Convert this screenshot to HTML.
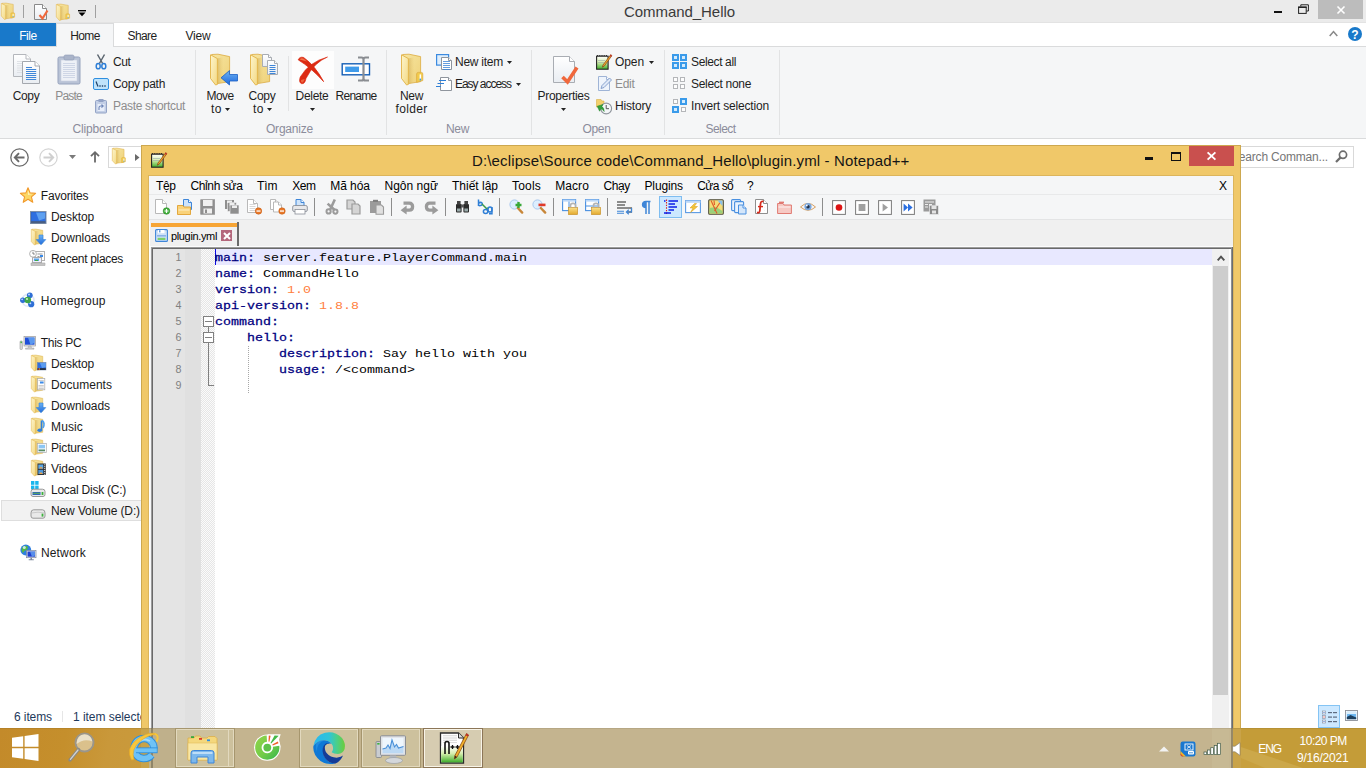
<!DOCTYPE html>
<html lang="vi">
<head>
<meta charset="utf-8">
<title>Command_Hello</title>
<style>
*{box-sizing:border-box;margin:0;padding:0}
html,body{width:1366px;height:768px;overflow:hidden;background:#fff}
body{position:relative;font-family:"Liberation Sans","DejaVu Sans",sans-serif;font-size:12px;color:#1e1e1e}
.abs{position:absolute}
.t{position:absolute;white-space:pre;line-height:14px;height:14px}
.m{font-family:"Liberation Mono","DejaVu Sans Mono",monospace}
svg{position:absolute;overflow:visible}
</style>
</head>
<body>

<svg width="0" height="0" style="position:absolute"><defs>
<linearGradient id="gF" x1="0" y1="0" x2="1" y2="1"><stop offset="0" stop-color="#fdf5cc"/><stop offset="1" stop-color="#f3d985"/></linearGradient>
<linearGradient id="gF2" x1="0" y1="0" x2="1" y2="1"><stop offset="0" stop-color="#f6e5a2"/><stop offset="1" stop-color="#efd27a"/></linearGradient>
<linearGradient id="gSp" x1="0" y1="0" x2="1" y2="0"><stop offset="0" stop-color="#c9a24a" stop-opacity=".55"/><stop offset="1" stop-color="#e6c468" stop-opacity="0"/></linearGradient>
<linearGradient id="gB" x1="0" y1="0" x2="0" y2="1"><stop offset="0" stop-color="#6db3f2"/><stop offset="1" stop-color="#1e69de"/></linearGradient>
<linearGradient id="gP" x1="0" y1="0" x2="0" y2="1"><stop offset="0" stop-color="#ffffff"/><stop offset="1" stop-color="#e9edf2"/></linearGradient>
<linearGradient id="gLock" x1="0" y1="0" x2="0" y2="1"><stop offset="0" stop-color="#fbe08a"/><stop offset="1" stop-color="#e3a92c"/></linearGradient>
<linearGradient id="gGreen" x1="0" y1="0" x2="0" y2="1"><stop offset="0" stop-color="#ffffff"/><stop offset="0.45" stop-color="#d8efb0"/><stop offset="1" stop-color="#3fae2a"/></linearGradient>
</defs></svg>
<div class="abs" style="left:0px;top:0px;width:1366px;height:23px;background:#ebebeb;"></div>
<div class="abs" style="left:0px;top:23px;width:1366px;height:24px;background:#fff;border-bottom:1px solid #dadbdc"></div>
<div class="abs" style="left:0px;top:47px;width:1366px;height:92px;background:#f5f6f7;border-bottom:1px solid #dadbdc"></div>
<svg style="left:1px;top:3px" width="13" height="17" viewBox="0 0 13 17"><g transform="scale(0.6250,0.5323)"><path d="M1.6 .5 L8 .2 L19.6 2.6 L19.6 27.6 L7.4 29.6 Z" fill="url(#gF2)" stroke="#dcab40" stroke-width=".8"/><path d="M7.4 4.6 L13.5 3 L13.5 28.6 L7.4 29.6 Z" fill="url(#gSp)"/><path d="M15.6 20 Q15.6 18.4 17.4 18.4 L20.6 18.4 Q21.8 18.4 21.8 20 L21.8 26.6 L15.6 28.4 Z" fill="#f2cb4c" stroke="#dcab40" stroke-width=".7"/><rect x="18.6" y="20.4" width="1.5" height="5.2" fill="#fff"/><rect x="18.6" y="24.6" width="1.5" height="1.8" fill="#3f9bea"/><path d="M.5 .8 L7.4 4.6 L7.4 30.4 L5.6 31 L.5 24.4 Z" fill="url(#gF)" stroke="#e2b245" stroke-width=".9" stroke-linejoin="round"/></g></svg>
<div class="abs" style="left:23px;top:5px;width:1px;height:13px;background:#a0a0a0;"></div>
<svg style="left:34px;top:4px" width="14" height="16" viewBox="0 0 14 16"><path d="M.5 .5 H8.5 L12.5 4.5 V15.5 H.5 Z" fill="url(#gP)" stroke="#8a8a8a" stroke-width="1"/><path d="M8.5 .5 V4.5 H12.5" fill="#fff" stroke="#8a8a8a" stroke-width="1"/><path d="M5.5 11 L8.5 14.5 L13.5 6.5" fill="none" stroke="#f0683c" stroke-width="2.2"/></svg>
<svg style="left:56px;top:4px" width="13" height="17" viewBox="0 0 13 17"><g transform="scale(0.6250,0.5323)"><path d="M1.6 .5 L8 .2 L19.6 2.6 L19.6 27.6 L7.4 29.6 Z" fill="url(#gF2)" stroke="#dcab40" stroke-width=".8"/><path d="M7.4 4.6 L13.5 3 L13.5 28.6 L7.4 29.6 Z" fill="url(#gSp)"/><path d="M15.6 20 Q15.6 18.4 17.4 18.4 L20.6 18.4 Q21.8 18.4 21.8 20 L21.8 26.6 L15.6 28.4 Z" fill="#f2cb4c" stroke="#dcab40" stroke-width=".7"/><rect x="18.6" y="20.4" width="1.5" height="5.2" fill="#fff"/><rect x="18.6" y="24.6" width="1.5" height="1.8" fill="#3f9bea"/><path d="M.5 .8 L7.4 4.6 L7.4 30.4 L5.6 31 L.5 24.4 Z" fill="url(#gF)" stroke="#e2b245" stroke-width=".9" stroke-linejoin="round"/></g></svg>
<svg style="left:78px;top:9px" width="8" height="8" viewBox="0 0 8 8"><rect x="0" y="1" width="8" height="1.4" fill="#000"/><path d="M0.5 3.6 H7.5 L4 7.2 Z" fill="#000"/></svg>
<div class="abs" style="left:95px;top:5px;width:1px;height:13px;background:#a0a0a0;"></div>
<div class="t" style="left:624.00px;top:2.50px;line-height:18px;height:18px;letter-spacing:-0.055px;font-size:15px;color:#3a3a3a">Command_Hello</div>
<div class="abs" style="left:1274px;top:11px;width:8px;height:2px;background:#111;"></div>
<svg style="left:1298px;top:4px" width="11" height="10" viewBox="0 0 11 10"><path d="M2.8 2.5 V0.8 H10.4 V7 H8.4" fill="none" stroke="#222" stroke-width="1"/><rect x="0.6" y="3.4" width="7.6" height="6" fill="none" stroke="#222" stroke-width="1"/><rect x=".1" y="2.4" width="8.6" height="1.5" fill="#222"/></svg>
<div class="abs" style="left:1318px;top:0px;width:45px;height:19px;background:#bcbcbc;"></div>
<svg style="left:1337px;top:5.5px" width="8" height="8" viewBox="0 0 8 8"><path d="M0.5 0.5 L7.5 7.5 M7.5 0.5 L0.5 7.5" stroke="#fff" stroke-width="1.6" fill="none"/></svg>
<div class="abs" style="left:0px;top:22px;width:1366px;height:1px;background:#e3e3e3;"></div>
<div class="abs" style="left:0px;top:23px;width:56px;height:23px;background:#1979ca;"></div>
<div class="t" style="left:19.25px;top:28.80px;line-height:14px;height:14px;letter-spacing:-0.461px;color:#fff">File</div>
<div class="abs" style="left:56px;top:23px;width:58px;height:24px;background:#f5f6f7;border:1px solid #dadbdc;border-bottom:none"></div>
<div class="t" style="left:70.25px;top:28.80px;line-height:14px;height:14px;letter-spacing:-0.629px;color:#1e1e1e">Home</div>
<div class="t" style="left:127.50px;top:28.80px;line-height:14px;height:14px;letter-spacing:-0.606px;color:#1e1e1e">Share</div>
<div class="t" style="left:185.50px;top:28.80px;line-height:14px;height:14px;letter-spacing:-0.199px;color:#1e1e1e">View</div>
<svg style="left:1329px;top:30px" width="9" height="7" viewBox="0 0 9 7"><path d="M0.7 6 L4.5 1.6 L8.3 6" fill="none" stroke="#8a8a8a" stroke-width="1.6"/></svg>
<div class="abs" style="left:1348px;top:27px;width:14px;height:14px;border-radius:7px;background:#1979ca"></div>
<div class="t" style="left:1351.33px;top:27.50px;line-height:14px;height:14px;color:#fff;font-weight:700">?</div>
<div class="abs" style="left:195px;top:50px;width:1px;height:85px;background:#e2e3e4;"></div>
<div class="abs" style="left:386px;top:50px;width:1px;height:85px;background:#e2e3e4;"></div>
<div class="abs" style="left:531px;top:50px;width:1px;height:85px;background:#e2e3e4;"></div>
<div class="abs" style="left:664px;top:50px;width:1px;height:85px;background:#e2e3e4;"></div>
<div class="abs" style="left:779px;top:50px;width:1px;height:85px;background:#e2e3e4;"></div>
<div class="abs" style="left:288px;top:56px;width:1px;height:55px;background:#e2e3e4;"></div>
<svg style="left:10px;top:54px" width="32" height="32" viewBox="0 0 32 32"><g transform="translate(3,0)"><path d="M.5 .5 H13.0 L17.5 5.0 V22.5 H.5 Z" fill="url(#gP)" stroke="#b4b7bc" stroke-width="1"/><path d="M13.0 .5 V5.0 H17.5" fill="#fff" stroke="#b4b7bc" stroke-width="1"/><rect x="4" y="7.0" width="7" height="0.8" fill="#d9dde2"/><rect x="4" y="9.2" width="7" height="0.8" fill="#d9dde2"/><rect x="4" y="11.4" width="7" height="0.8" fill="#d9dde2"/><rect x="4" y="13.600000000000001" width="7" height="0.8" fill="#d9dde2"/><rect x="4" y="15.8" width="7" height="0.8" fill="#d9dde2"/><rect x="4" y="18.0" width="7" height="0.8" fill="#d9dde2"/></g><g transform="translate(12,7)"><path d="M.5 .5 H13.0 L17.5 5.0 V22.5 H.5 Z" fill="url(#gP)" stroke="#a4a8ae" stroke-width="1"/><path d="M13.0 .5 V5.0 H17.5" fill="#fff" stroke="#a4a8ae" stroke-width="1"/><rect x="4" y="6" width="6" height="1" fill="#3f86d8"/><rect x="4" y="8" width="10.2" height="1" fill="#3f86d8"/><rect x="4" y="10" width="10.2" height="1" fill="#3f86d8"/><rect x="4" y="12" width="10.2" height="1" fill="#3f86d8"/><rect x="4" y="14" width="10.2" height="1" fill="#3f86d8"/><rect x="4" y="16" width="10.2" height="1" fill="#3f86d8"/><rect x="4" y="18" width="10.2" height="1" fill="#3f86d8"/></g></svg>
<div class="t" style="left:12.70px;top:88.80px;line-height:14px;height:14px;letter-spacing:-0.354px;color:#1e1e1e">Copy</div>
<svg style="left:53px;top:54px" width="30" height="32" viewBox="0 0 30 32"><rect x="5" y="3" width="22" height="27" rx="1.5" fill="#b9c3d6" stroke="#97a3bd"/><rect x="8" y="6" width="16" height="21" fill="#eef1f7" stroke="#c9d0df" stroke-width=".6"/><rect x="11" y="1" width="10" height="5" rx="1.5" fill="#aab4c9" stroke="#8f9bb5" stroke-width=".6"/><rect x="10" y="9" width="12" height="1" fill="#cfd6e6"/><rect x="10" y="11" width="12" height="1" fill="#cfd6e6"/><rect x="10" y="13" width="12" height="1" fill="#cfd6e6"/><rect x="10" y="15" width="12" height="1" fill="#cfd6e6"/><rect x="10" y="17" width="12" height="1" fill="#cfd6e6"/><rect x="10" y="19" width="12" height="1" fill="#cfd6e6"/><rect x="10" y="21" width="12" height="1" fill="#cfd6e6"/><rect x="10" y="23" width="12" height="1" fill="#cfd6e6"/></svg>
<div class="t" style="left:55.30px;top:88.80px;line-height:14px;height:14px;letter-spacing:-0.817px;color:#8d8d8d">Paste</div>
<svg style="left:94px;top:54px" width="14" height="16" viewBox="0 0 14 16"><path d="M3.5 0.5 L8.6 9.5 M10.5 0.5 L5.4 9.5" stroke="#5c6670" stroke-width="1.5" fill="none"/><ellipse cx="4.2" cy="12.2" rx="2" ry="2.6" fill="none" stroke="#2f7fd6" stroke-width="1.5"/><ellipse cx="9.8" cy="12.2" rx="2" ry="2.6" fill="none" stroke="#2f7fd6" stroke-width="1.5"/></svg>
<div class="t" style="left:113.00px;top:54.80px;line-height:14px;height:14px;letter-spacing:-0.396px;color:#1e1e1e">Cut</div>
<svg style="left:93px;top:78px" width="16" height="12" viewBox="0 0 16 12"><rect x=".5" y=".5" width="15" height="11" rx="1.5" fill="#bfe3fb" stroke="#2f8fe0"/><path d="M3 3.5 L5 8.5" stroke="#1d3f66" stroke-width="1.2"/><rect x="6.3" y="7.3" width="1.4" height="1.4" fill="#1d3f66"/><rect x="8.8" y="7.3" width="1.4" height="1.4" fill="#1d3f66"/><rect x="11.3" y="7.3" width="1.4" height="1.4" fill="#1d3f66"/></svg>
<div class="t" style="left:113.00px;top:76.80px;line-height:14px;height:14px;letter-spacing:-0.300px;color:#1e1e1e">Copy path</div>
<svg style="left:95px;top:99px" width="13" height="15" viewBox="0 0 13 15"><rect x=".5" y="1.5" width="11" height="12.5" rx="1" fill="#c3cfe6" stroke="#93a3c6"/><rect x="3.5" y="0" width="5" height="3" fill="#93a3c6"/><rect x="2.5" y="5" width="7" height="7" fill="#e8eefa"/><path d="M4 11 L4 8.5 Q4 7 5.8 7 L8 7 M6.5 5.5 L8.2 7 L6.5 8.6" fill="none" stroke="#7189b9" stroke-width="1.1"/></svg>
<div class="t" style="left:113.00px;top:98.80px;line-height:14px;height:14px;letter-spacing:-0.337px;color:#8d8d8d">Paste shortcut</div>
<div class="t" style="left:72.50px;top:122.00px;line-height:14px;height:14px;letter-spacing:-0.153px;color:#8b8c9b">Clipboard</div>
<svg style="left:207px;top:53px" width="32" height="34" viewBox="0 0 32 34"><g transform="translate(3,1)"><g transform="scale(1.0000,1.0000)"><path d="M1.6 .5 L8 .2 L19.6 2.6 L19.6 27.6 L7.4 29.6 Z" fill="url(#gF2)" stroke="#dcab40" stroke-width=".8"/><path d="M7.4 4.6 L13.5 3 L13.5 28.6 L7.4 29.6 Z" fill="url(#gSp)"/><path d="M.5 .8 L7.4 4.6 L7.4 30.4 L5.6 31 L.5 24.4 Z" fill="url(#gF)" stroke="#e2b245" stroke-width=".9" stroke-linejoin="round"/></g></g><path d="M30.5 21.5 V28 H22.5 V32 L14 24.8 L22.5 17.5 V21.5 Z" fill="url(#gB)" stroke="#1a5fc4" stroke-width=".8"/></svg>
<div class="t" style="left:206.50px;top:88.80px;line-height:14px;height:14px;letter-spacing:-0.586px;color:#1e1e1e">Move</div>
<div class="t" style="left:211.00px;top:101.60px;line-height:14px;height:14px;letter-spacing:0.492px;color:#1e1e1e">to</div>
<svg style="left:225px;top:108px" width="5" height="3" viewBox="0 0 5 3"><path d="M0 0 H5 L2.5 3 Z" fill="#222"/></svg>
<svg style="left:248px;top:53px" width="34" height="34" viewBox="0 0 34 34"><g transform="translate(2,1)"><g transform="scale(1.0000,1.0000)"><path d="M1.6 .5 L8 .2 L19.6 2.6 L19.6 27.6 L7.4 29.6 Z" fill="url(#gF2)" stroke="#dcab40" stroke-width=".8"/><path d="M7.4 4.6 L13.5 3 L13.5 28.6 L7.4 29.6 Z" fill="url(#gSp)"/><path d="M.5 .8 L7.4 4.6 L7.4 30.4 L5.6 31 L.5 24.4 Z" fill="url(#gF)" stroke="#e2b245" stroke-width=".9" stroke-linejoin="round"/></g></g><g transform="translate(14,1)"><path d="M.5 .5 H6.5 L9.5 3.5 V12.5 H.5 Z" fill="url(#gP)" stroke="#a9adb3" stroke-width="1"/><path d="M6.5 .5 V3.5 H9.5" fill="#fff" stroke="#a9adb3" stroke-width="1"/></g><g transform="translate(19,7)"><path d="M.5 .5 H7.5 L10.5 3.5 V14.5 H.5 Z" fill="url(#gP)" stroke="#a9adb3" stroke-width="1"/><path d="M7.5 .5 V3.5 H10.5" fill="#fff" stroke="#a9adb3" stroke-width="1"/><rect x="2.5" y="5" width="6" height="1" fill="#3f86d8"/><rect x="2.5" y="7" width="6" height="1" fill="#3f86d8"/><rect x="2.5" y="9" width="6" height="1" fill="#3f86d8"/><rect x="2.5" y="11" width="6" height="1" fill="#3f86d8"/><rect x="2.5" y="13" width="6" height="1" fill="#3f86d8"/></g></svg>
<div class="t" style="left:248.50px;top:88.80px;line-height:14px;height:14px;letter-spacing:-0.254px;color:#1e1e1e">Copy</div>
<div class="t" style="left:253.00px;top:101.60px;line-height:14px;height:14px;letter-spacing:0.492px;color:#1e1e1e">to</div>
<svg style="left:267px;top:108px" width="5" height="3" viewBox="0 0 5 3"><path d="M0 0 H5 L2.5 3 Z" fill="#222"/></svg>
<div class="abs" style="left:292px;top:51px;width:42px;height:38px;background:#fdfdfd;"></div>
<svg style="left:297px;top:56px" width="31" height="29" viewBox="0 0 31 29"><path d="M1.2 3.8 Q2.6 .4 6.6 1.5 Q18 9.5 26.6 25.6 Q14 11.5 1.2 3.8 Z" fill="#dc2a12" stroke="#dc2a12" stroke-width=".8" stroke-linejoin="round"/><path d="M30.5 1 Q17 6.5 9 22.5 Q8 28.2 4.6 27.7 Q1.4 26.6 3.2 21 Q12 6 30.5 1 Z" fill="#dc2a12" stroke="#dc2a12" stroke-width=".6" stroke-linejoin="round"/><path d="M2.6 3.4 Q4 1.6 6.4 2.6 L10 5.6 Z" fill="#f2734a"/><path d="M4 24 Q3.6 26.6 5.4 26.8 Q7 26 7.6 23 Z" fill="#f2734a" opacity=".8"/></svg>
<div class="t" style="left:295.50px;top:88.80px;line-height:14px;height:14px;letter-spacing:-0.281px;color:#1e1e1e">Delete</div>
<svg style="left:309.5px;top:108px" width="5" height="3" viewBox="0 0 5 3"><path d="M0 0 H5 L2.5 3 Z" fill="#222"/></svg>
<svg style="left:341px;top:56px" width="32" height="27" viewBox="0 0 32 27"><rect x="1.2" y="7.8" width="27.3" height="11" fill="#fff" stroke="#165fb6" stroke-width="1.4"/><rect x="4.2" y="10.6" width="13.8" height="5.4" fill="#3f9bea"/><path d="M17 1.5 H20.5 Q22.5 1.5 22.5 3.5 V22.5 Q22.5 24.5 20.5 24.5 H17 M28 1.5 H24.5 Q22.5 1.5 22.5 3.5 M22.5 22.5 Q22.5 24.5 24.5 24.5 H28" fill="none" stroke="#8a8d92" stroke-width="2.2"/></svg>
<div class="t" style="left:335.50px;top:88.80px;line-height:14px;height:14px;letter-spacing:-0.727px;color:#1e1e1e">Rename</div>
<div class="t" style="left:266.00px;top:122.00px;line-height:14px;height:14px;letter-spacing:-0.213px;color:#8b8c9b">Organize</div>
<svg style="left:397px;top:53px" width="32" height="34" viewBox="0 0 32 34"><g transform="translate(4,1)"><g transform="scale(1.0000,1.0000)"><path d="M1.6 .5 L8 .2 L19.6 2.6 L19.6 27.6 L7.4 29.6 Z" fill="url(#gF2)" stroke="#dcab40" stroke-width=".8"/><path d="M7.4 4.6 L13.5 3 L13.5 28.6 L7.4 29.6 Z" fill="url(#gSp)"/><path d="M15.6 20 Q15.6 18.4 17.4 18.4 L20.6 18.4 Q21.8 18.4 21.8 20 L21.8 26.6 L15.6 28.4 Z" fill="#f2cb4c" stroke="#dcab40" stroke-width=".7"/><rect x="18.6" y="20.4" width="1.5" height="5.2" fill="#fff"/><rect x="18.6" y="24.6" width="1.5" height="1.8" fill="#3f9bea"/><path d="M.5 .8 L7.4 4.6 L7.4 30.4 L5.6 31 L.5 24.4 Z" fill="url(#gF)" stroke="#e2b245" stroke-width=".9" stroke-linejoin="round"/></g></g></svg>
<div class="t" style="left:400.00px;top:88.80px;line-height:14px;height:14px;letter-spacing:-0.339px;color:#1e1e1e">New</div>
<div class="t" style="left:395.50px;top:101.60px;line-height:14px;height:14px;letter-spacing:0.328px;color:#1e1e1e">folder</div>
<svg style="left:436px;top:54px" width="17" height="17" viewBox="0 0 17 17"><rect x=".6" y=".6" width="12" height="10.5" fill="#dfeefc" stroke="#3b8ae0" stroke-width="1.2"/><g transform="translate(5,3)"><path d="M.5 .5 H7.5 L10.5 3.5 V12.5 H.5 Z" fill="#fff" stroke="#8f959d" stroke-width="1"/><path d="M7.5 .5 V3.5 H10.5" fill="#fff" stroke="#8f959d" stroke-width="1"/><rect x="2" y="4" width="7" height="0.8" fill="#3f86d8"/><rect x="2" y="6" width="7" height="0.8" fill="#3f86d8"/><rect x="2" y="8" width="7" height="0.8" fill="#3f86d8"/><rect x="2" y="10" width="7" height="0.8" fill="#3f86d8"/><rect x="2" y="12" width="7" height="0.8" fill="#3f86d8"/></g></svg>
<div class="t" style="left:455.00px;top:54.80px;line-height:14px;height:14px;letter-spacing:-0.252px;color:#1e1e1e">New item</div>
<svg style="left:507px;top:60.5px" width="5" height="3" viewBox="0 0 5 3"><path d="M0 0 H5 L2.5 3 Z" fill="#222"/></svg>
<svg style="left:436px;top:76px" width="17" height="16" viewBox="0 0 17 16"><g transform="translate(4,1)"><path d="M.5 .5 H8.5 L11.5 3.5 V13.5 H.5 Z" fill="#fff" stroke="#8f959d" stroke-width="1"/><path d="M8.5 .5 V3.5 H11.5" fill="#fff" stroke="#8f959d" stroke-width="1"/></g><path d="M3 4.5 H10 M1.5 7.5 H8 M0 10.5 H5" stroke="#2f7fd6" stroke-width="1.2"/></svg>
<div class="t" style="left:455.00px;top:76.80px;line-height:14px;height:14px;letter-spacing:-1.033px;color:#1e1e1e">Easy access</div>
<svg style="left:516px;top:82.5px" width="5" height="3" viewBox="0 0 5 3"><path d="M0 0 H5 L2.5 3 Z" fill="#222"/></svg>
<div class="t" style="left:446.00px;top:122.00px;line-height:14px;height:14px;letter-spacing:-0.339px;color:#8b8c9b">New</div>
<svg style="left:552px;top:55px" width="28" height="30" viewBox="0 0 28 30"><g transform="translate(1,1)"><path d="M.5 .5 H16.5 L21.5 5.5 V26.5 H.5 Z" fill="url(#gP)" stroke="#a9adb3" stroke-width="1"/><path d="M16.5 .5 V5.5 H21.5" fill="#fff" stroke="#a9adb3" stroke-width="1"/></g><path d="M10.5 22 L15.5 27 L25 12.5" fill="none" stroke="#f0683c" stroke-width="3.6"/></svg>
<div class="t" style="left:537.50px;top:88.80px;line-height:14px;height:14px;letter-spacing:-0.270px;color:#1e1e1e">Properties</div>
<svg style="left:561px;top:108px" width="5" height="3" viewBox="0 0 5 3"><path d="M0 0 H5 L2.5 3 Z" fill="#222"/></svg>
<svg style="left:596px;top:54px" width="16" height="16" viewBox="0 0 16 16"><g transform="scale(1.0)"><rect x=".6" y="2.2" width="11.5" height="13" fill="url(#gGreen)" stroke="#222" stroke-width="1.1"/><path d="M1.5 2 V1 M3.3 2 V1 M5.1 2 V1 M6.9 2 V1 M8.7 2 V1 M10.5 2 V1" stroke="#222" stroke-width=".9"/><path d="M2 6.5 H9 M2 8.5 H8" stroke="#9aa" stroke-width=".6"/><path d="M14.8 .6 L15.8 1.8 L8.3 12 L6.4 13.2 L7 11 Z" fill="#f0b028" stroke="#8a3a18" stroke-width=".7"/><path d="M13.9 1.8 L14.8 .6 L15.8 1.8 L15 3 Z" fill="#c0282a"/></g></svg>
<div class="t" style="left:615.00px;top:54.80px;line-height:14px;height:14px;letter-spacing:-0.090px;color:#1e1e1e">Open</div>
<svg style="left:649px;top:60.5px" width="5" height="3" viewBox="0 0 5 3"><path d="M0 0 H5 L2.5 3 Z" fill="#222"/></svg>
<svg style="left:598px;top:76px" width="14" height="16" viewBox="0 0 14 16"><path d="M.5 .5 H8.5 L11.5 3.5 V14.5 H.5 Z" fill="#eef4fc" stroke="#9fb4d6" stroke-width="1"/><path d="M8.5 .5 V3.5 H11.5" fill="#fff" stroke="#9fb4d6" stroke-width="1"/><path d="M3 12.5 L4 9.5 L11.5 2 L13.5 4 L6 11.5 Z" fill="#dfe9f8" stroke="#7d98c8" stroke-width=".9"/></svg>
<div class="t" style="left:615.00px;top:76.80px;line-height:14px;height:14px;letter-spacing:-0.297px;color:#8d8d8d">Edit</div>
<svg style="left:596px;top:98px" width="17" height="17" viewBox="0 0 17 17"><path d="M.5 1.5 H5 L6 3 H8 V9 H.5 Z" fill="#f3d06c" stroke="#d9ae45" stroke-width=".6"/><circle cx="10.2" cy="10.5" r="5.4" fill="#f4f6f8" stroke="#8f959c" stroke-width="1.1"/><path d="M10.2 7 V10.7 H13" fill="none" stroke="#555" stroke-width="1"/><path d="M1.2 8.2 L3.6 13.2 L5 10.8 Q7 11.5 8.2 13.5 Q8 9.5 5.9 8.6 L7 6.5 Z" fill="#35a03a" stroke="#23822a" stroke-width=".5"/></svg>
<div class="t" style="left:615.00px;top:98.80px;line-height:14px;height:14px;letter-spacing:-0.192px;color:#1e1e1e">History</div>
<div class="t" style="left:582.50px;top:122.00px;line-height:14px;height:14px;letter-spacing:-0.340px;color:#8b8c9b">Open</div>
<svg style="left:672px;top:54px" width="16" height="16" viewBox="0 0 16 16"><rect x="0" y="0" width="7" height="7" fill="#3a9bea"/><rect x="2" y="2" width="3" height="3" fill="#d4ebfc"/><rect x="8" y="0" width="7" height="7" fill="#3a9bea"/><rect x="10" y="2" width="3" height="3" fill="#d4ebfc"/><rect x="0" y="8" width="7" height="7" fill="#3a9bea"/><rect x="2" y="10" width="3" height="3" fill="#d4ebfc"/><rect x="8" y="8" width="7" height="7" fill="#3a9bea"/><rect x="10" y="10" width="3" height="3" fill="#d4ebfc"/></svg>
<div class="t" style="left:691.00px;top:54.80px;line-height:14px;height:14px;letter-spacing:-0.370px;color:#1e1e1e">Select all</div>
<svg style="left:672px;top:76px" width="16" height="16" viewBox="0 0 16 16"><rect x="1.5" y="1.5" width="4" height="4" fill="#fdfdfd" stroke="#b4b6b9" stroke-width="1"/><rect x="8.5" y="1.5" width="4" height="4" fill="#fdfdfd" stroke="#b4b6b9" stroke-width="1"/><rect x="1.5" y="8.5" width="4" height="4" fill="#fdfdfd" stroke="#b4b6b9" stroke-width="1"/><rect x="8.5" y="8.5" width="4" height="4" fill="#fdfdfd" stroke="#b4b6b9" stroke-width="1"/></svg>
<div class="t" style="left:691.00px;top:76.80px;line-height:14px;height:14px;letter-spacing:-0.308px;color:#1e1e1e">Select none</div>
<svg style="left:672px;top:98px" width="16" height="16" viewBox="0 0 16 16"><rect x="1.5" y="1.5" width="4" height="4" fill="#fdfdfd" stroke="#b4b6b9" stroke-width="1"/><rect x="8" y="0" width="7" height="7" fill="#3a9bea"/><rect x="10" y="2" width="3" height="3" fill="#d4ebfc"/><rect x="0" y="8" width="7" height="7" fill="#3a9bea"/><rect x="2" y="10" width="3" height="3" fill="#d4ebfc"/><rect x="9.5" y="9.5" width="4" height="4" fill="#fdfdfd" stroke="#b4b6b9" stroke-width="1"/></svg>
<div class="t" style="left:691.00px;top:98.80px;line-height:14px;height:14px;letter-spacing:-0.170px;color:#1e1e1e">Invert selection</div>
<div class="t" style="left:705.50px;top:122.00px;line-height:14px;height:14px;letter-spacing:-0.560px;color:#8b8c9b">Select</div>
<svg style="left:10px;top:147.5px" width="19" height="19" viewBox="0 0 19 19"><circle cx="9.5" cy="9.5" r="8.7" fill="none" stroke="#6a6a6a" stroke-width="1.3"/><path d="M14.5 9.5 H5 M9 5.2 L4.8 9.5 L9 13.8" fill="none" stroke="#6a6a6a" stroke-width="1.9"/></svg>
<svg style="left:38.5px;top:147.5px" width="19" height="19" viewBox="0 0 19 19"><circle cx="9.5" cy="9.5" r="8.7" fill="none" stroke="#d4d4d4" stroke-width="1.2"/><path d="M4.5 9.5 H14 M10 5.2 L14.2 9.5 L10 13.8" fill="none" stroke="#cfcfcf" stroke-width="1.9"/></svg>
<svg style="left:69px;top:155px" width="7" height="4" viewBox="0 0 7 4"><path d="M0 0 H7 L3.5 4 Z" fill="#7a7a7a"/></svg>
<svg style="left:90px;top:151px" width="10" height="12" viewBox="0 0 10 12"><path d="M5 11.5 V1.5 M1 5.2 L5 1.2 L9 5.2" fill="none" stroke="#6a6a6a" stroke-width="1.8"/></svg>
<div class="abs" style="left:108px;top:146px;width:40px;height:22px;background:#fff;border:1px solid #d9d9d9"></div>
<svg style="left:112px;top:148px" width="13" height="16" viewBox="0 0 13 16"><g transform="scale(0.6150,0.5161)"><path d="M1.6 .5 L8 .2 L19.6 2.6 L19.6 27.6 L7.4 29.6 Z" fill="url(#gF2)" stroke="#dcab40" stroke-width=".8"/><path d="M7.4 4.6 L13.5 3 L13.5 28.6 L7.4 29.6 Z" fill="url(#gSp)"/><path d="M15.6 20 Q15.6 18.4 17.4 18.4 L20.6 18.4 Q21.8 18.4 21.8 20 L21.8 26.6 L15.6 28.4 Z" fill="#f2cb4c" stroke="#dcab40" stroke-width=".7"/><rect x="18.6" y="20.4" width="1.5" height="5.2" fill="#fff"/><rect x="18.6" y="24.6" width="1.5" height="1.8" fill="#3f9bea"/><path d="M.5 .8 L7.4 4.6 L7.4 30.4 L5.6 31 L.5 24.4 Z" fill="url(#gF)" stroke="#e2b245" stroke-width=".9" stroke-linejoin="round"/></g></svg>
<svg style="left:135px;top:154px" width="5" height="7" viewBox="0 0 5 7"><path d="M0 0 L4.5 3.5 L0 7 Z" fill="#6a6a6a"/></svg>
<div class="abs" style="left:1225px;top:146px;width:129px;height:22px;background:#fff;border:1px solid #d9d9d9"></div>
<div class="t" style="left:1231.00px;top:149.50px;line-height:14px;height:14px;letter-spacing:-0.190px;color:#767676">Search Comman...</div>
<svg style="left:1335px;top:150px" width="13" height="13" viewBox="0 0 13 13"><circle cx="8" cy="4.8" r="3.6" fill="none" stroke="#6d6d6d" stroke-width="1.7"/><path d="M5.6 7.4 L1 12" stroke="#6d6d6d" stroke-width="2.2"/></svg>
<div class="abs" style="left:1px;top:500px;width:141px;height:21px;background:#f2f2f2;border:1px solid #dedede"></div>
<svg style="left:20px;top:187px" width="16" height="16" viewBox="0 0 16 16"><path d="M8 .8 L10.1 5.9 L15.6 6.3 L11.4 9.9 L12.8 15.3 L8 12.3 L3.2 15.3 L4.6 9.9 L.4 6.3 L5.9 5.9 Z" fill="#fcd765" stroke="#f19a2c" stroke-width="1.1" stroke-linejoin="round"/><path d="M8 3.5 L9.3 6.8 L12.5 7 L8 8 Z" fill="#fff3b8"/></svg>
<div class="t" style="left:40.80px;top:188.50px;line-height:14px;height:14px;letter-spacing:-0.207px;color:#1a1a1a">Favorites</div>
<svg style="left:30px;top:211px" width="17" height="13" viewBox="0 0 17 13"><rect x=".5" y=".5" width="15.5" height="12" fill="#2a62c8" stroke="#7f90a8"/><rect x="1.5" y="1.5" width="13.5" height="8.5" fill="#2f6fe0"/><path d="M6 1.5 L15 1.5 L15 7.5 L9 9.5 Z" fill="#6fb0f6" opacity=".75"/><rect x="1" y="10.2" width="14.5" height="2" fill="#4a5e80"/></svg>
<div class="t" style="left:51.00px;top:209.50px;line-height:14px;height:14px;letter-spacing:-0.147px;color:#1a1a1a">Desktop</div>
<svg style="left:31px;top:229px" width="16" height="16" viewBox="0 0 16 16"><g transform="scale(0.6000,0.5161)"><path d="M1.6 .5 L8 .2 L19.6 2.6 L19.6 27.6 L7.4 29.6 Z" fill="url(#gF2)" stroke="#dcab40" stroke-width=".8"/><path d="M7.4 4.6 L13.5 3 L13.5 28.6 L7.4 29.6 Z" fill="url(#gSp)"/><path d="M.5 .8 L7.4 4.6 L7.4 30.4 L5.6 31 L.5 24.4 Z" fill="url(#gF)" stroke="#e2b245" stroke-width=".9" stroke-linejoin="round"/></g><path d="M8 6 H12 V10.6 H14.8 L10 15.8 L5.2 10.6 H8 Z" fill="url(#gB)" stroke="#2b7fdc" stroke-width=".6"/></svg>
<div class="t" style="left:51.00px;top:230.50px;line-height:14px;height:14px;letter-spacing:-0.042px;color:#1a1a1a">Downloads</div>
<svg style="left:29px;top:250px" width="17" height="16" viewBox="0 0 17 16"><rect x="6.5" y="1.5" width="9" height="9" fill="#fdfdfd" stroke="#b0b0b0"/><rect x="8.5" y="3.5" width="5" height="1" fill="#999"/><rect x="11" y="5" width="3" height="2" fill="#3a8ae8"/><rect x="8.5" y="6" width="2" height="1" fill="#999"/><rect x="3.5" y="7.5" width="9" height="5" fill="#eef" stroke="#aaa"/><rect x="5" y="8.5" width="5" height="2.5" fill="#5aa7e8"/><rect x="6" y="10" width="3" height="1" fill="#4a4"/><path d="M2 13 H16 V15.5 H2 Z" fill="#c4c4c4" stroke="#a8a8a8" stroke-width=".6"/><circle cx="4" cy="3.8" r="3.4" fill="#fff" stroke="#aaa" stroke-width=".9"/><path d="M4 1.8 V4 H5.8" stroke="#666" stroke-width=".8" fill="none"/></svg>
<div class="t" style="left:51.00px;top:251.50px;line-height:14px;height:14px;letter-spacing:-0.311px;color:#1a1a1a">Recent places</div>
<svg style="left:20px;top:292px" width="16" height="16" viewBox="0 0 16 16"><circle cx="8" cy="8.2" r="6" fill="none" stroke="#dfe8f6" stroke-width="1.6"/><circle cx="9.8" cy="3.3" r="2.9" fill="#2f6fd6"/><circle cx="9" cy="2.4" r="1" fill="#bcd8ff"/><circle cx="2.8" cy="8.2" r="2.7" fill="#2f6fd6"/><circle cx="2.1" cy="7.3" r=".9" fill="#bcd8ff"/><circle cx="11.2" cy="12.2" r="3.1" fill="#2f6fd6"/><circle cx="10.3" cy="11.2" r="1" fill="#bcd8ff"/><circle cx="7.8" cy="8" r="3.3" fill="#3fa64a"/><circle cx="7" cy="7" r="1.1" fill="#c3efc0"/></svg>
<div class="t" style="left:40.80px;top:293.50px;line-height:14px;height:14px;letter-spacing:0.255px;color:#1a1a1a">Homegroup</div>
<svg style="left:20px;top:336px" width="16" height="14" viewBox="0 0 16 14"><rect x="0" y="5" width="2.4" height="8.5" rx=".8" fill="#d8d8d8" stroke="#8a8a8a" stroke-width=".5"/><rect x=".5" y="5.5" width="1.4" height="1.6" fill="#3db13d"/><rect x="4" y=".5" width="11.5" height="9.5" fill="#e6e6e6" stroke="#9a9a9a" stroke-width=".7"/><rect x="5" y="1.5" width="9.5" height="7.2" fill="#1f4fd8"/><path d="M8 1.5 L14.5 1.5 L14.5 7 L10.5 8.7 Z" fill="#6fb0f6" opacity=".75"/><path d="M8.5 10 H11 L11.6 12 H14 V13.2 H5.5 V12 H7.9 Z" fill="#c9c9c9" stroke="#9a9a9a" stroke-width=".4"/></svg>
<div class="t" style="left:40.80px;top:335.50px;line-height:14px;height:14px;letter-spacing:-0.312px;color:#1a1a1a">This PC</div>
<svg style="left:31px;top:355px" width="16" height="16" viewBox="0 0 16 16"><g transform="scale(0.6000,0.5161)"><path d="M1.6 .5 L8 .2 L19.6 2.6 L19.6 27.6 L7.4 29.6 Z" fill="url(#gF2)" stroke="#dcab40" stroke-width=".8"/><path d="M7.4 4.6 L13.5 3 L13.5 28.6 L7.4 29.6 Z" fill="url(#gSp)"/><path d="M.5 .8 L7.4 4.6 L7.4 30.4 L5.6 31 L.5 24.4 Z" fill="url(#gF)" stroke="#e2b245" stroke-width=".9" stroke-linejoin="round"/></g><rect x="6.3" y="7.5" width="8.7" height="7.5" fill="#2f6fe0" stroke="#6f86a8" stroke-width=".5"/><path d="M9 8 L14.8 8 L14.8 12 L11 13 Z" fill="#6fb0f6" opacity=".7"/><rect x="6.5" y="13.3" width="8.3" height="1.5" fill="#222"/><rect x="7" y="13.5" width="1" height="1" fill="#e33"/><rect x="8" y="13.5" width="1" height="1" fill="#fc3"/></svg>
<div class="t" style="left:51.00px;top:356.50px;line-height:14px;height:14px;letter-spacing:-0.147px;color:#1a1a1a">Desktop</div>
<svg style="left:31px;top:376px" width="16" height="16" viewBox="0 0 16 16"><g transform="scale(0.6000,0.5161)"><path d="M1.6 .5 L8 .2 L19.6 2.6 L19.6 27.6 L7.4 29.6 Z" fill="url(#gF2)" stroke="#dcab40" stroke-width=".8"/><path d="M7.4 4.6 L13.5 3 L13.5 28.6 L7.4 29.6 Z" fill="url(#gSp)"/><path d="M.5 .8 L7.4 4.6 L7.4 30.4 L5.6 31 L.5 24.4 Z" fill="url(#gF)" stroke="#e2b245" stroke-width=".9" stroke-linejoin="round"/></g><rect x="6.5" y="2.5" width="7.3" height="11.3" fill="#fdfdfd" stroke="#a9a9a9" stroke-width=".7"/><rect x="9" y="5.5" width="3.6" height="2" fill="#3a8ae8"/><rect x="7.5" y="9.0" width="5.3" height="0.7" fill="#b9b9b9"/><rect x="7.5" y="10.6" width="5.3" height="0.7" fill="#b9b9b9"/><rect x="7.5" y="12.2" width="5.3" height="0.7" fill="#b9b9b9"/><rect x="7.5" y="4" width="5.3" height="0.7" fill="#b9b9b9"/></svg>
<div class="t" style="left:51.00px;top:377.50px;line-height:14px;height:14px;letter-spacing:0.033px;color:#1a1a1a">Documents</div>
<svg style="left:31px;top:397px" width="16" height="16" viewBox="0 0 16 16"><g transform="scale(0.6000,0.5161)"><path d="M1.6 .5 L8 .2 L19.6 2.6 L19.6 27.6 L7.4 29.6 Z" fill="url(#gF2)" stroke="#dcab40" stroke-width=".8"/><path d="M7.4 4.6 L13.5 3 L13.5 28.6 L7.4 29.6 Z" fill="url(#gSp)"/><path d="M.5 .8 L7.4 4.6 L7.4 30.4 L5.6 31 L.5 24.4 Z" fill="url(#gF)" stroke="#e2b245" stroke-width=".9" stroke-linejoin="round"/></g><path d="M8 6 H12 V10.6 H14.8 L10 15.8 L5.2 10.6 H8 Z" fill="url(#gB)" stroke="#2b7fdc" stroke-width=".6"/></svg>
<div class="t" style="left:51.00px;top:398.50px;line-height:14px;height:14px;letter-spacing:-0.042px;color:#1a1a1a">Downloads</div>
<svg style="left:31px;top:418px" width="16" height="16" viewBox="0 0 16 16"><g transform="scale(0.6000,0.5161)"><path d="M1.6 .5 L8 .2 L19.6 2.6 L19.6 27.6 L7.4 29.6 Z" fill="url(#gF2)" stroke="#dcab40" stroke-width=".8"/><path d="M7.4 4.6 L13.5 3 L13.5 28.6 L7.4 29.6 Z" fill="url(#gSp)"/><path d="M.5 .8 L7.4 4.6 L7.4 30.4 L5.6 31 L.5 24.4 Z" fill="url(#gF)" stroke="#e2b245" stroke-width=".9" stroke-linejoin="round"/></g><path d="M10.5 2.5 V12" stroke="#2f7fdc" stroke-width="1.6"/><path d="M11 2.5 Q14.5 5 12 10" fill="none" stroke="#4fa0ee" stroke-width="1.6"/><ellipse cx="8.8" cy="12.3" rx="2.4" ry="1.8" fill="#2f7fdc"/></svg>
<div class="t" style="left:51.00px;top:419.50px;line-height:14px;height:14px;letter-spacing:0.131px;color:#1a1a1a">Music</div>
<svg style="left:31px;top:439px" width="16" height="16" viewBox="0 0 16 16"><g transform="scale(0.6000,0.5161)"><path d="M1.6 .5 L8 .2 L19.6 2.6 L19.6 27.6 L7.4 29.6 Z" fill="url(#gF2)" stroke="#dcab40" stroke-width=".8"/><path d="M7.4 4.6 L13.5 3 L13.5 28.6 L7.4 29.6 Z" fill="url(#gSp)"/><path d="M.5 .8 L7.4 4.6 L7.4 30.4 L5.6 31 L.5 24.4 Z" fill="url(#gF)" stroke="#e2b245" stroke-width=".9" stroke-linejoin="round"/></g><rect x="6.3" y="4.5" width="9" height="9" fill="#fdfdfd" stroke="#a9a9a9" stroke-width=".7"/><rect x="7.6" y="5.8" width="6.4" height="6.4" fill="#8cc6f4"/><rect x="7.6" y="9.3" width="6.4" height="1.3" fill="#f4f8fb"/><rect x="7.6" y="10.6" width="6.4" height="1.6" fill="#5a8d62"/></svg>
<div class="t" style="left:51.00px;top:440.50px;line-height:14px;height:14px;letter-spacing:-0.170px;color:#1a1a1a">Pictures</div>
<svg style="left:31px;top:460px" width="16" height="16" viewBox="0 0 16 16"><g transform="scale(0.6000,0.5161)"><path d="M1.6 .5 L8 .2 L19.6 2.6 L19.6 27.6 L7.4 29.6 Z" fill="url(#gF2)" stroke="#dcab40" stroke-width=".8"/><path d="M7.4 4.6 L13.5 3 L13.5 28.6 L7.4 29.6 Z" fill="url(#gSp)"/><path d="M.5 .8 L7.4 4.6 L7.4 30.4 L5.6 31 L.5 24.4 Z" fill="url(#gF)" stroke="#e2b245" stroke-width=".9" stroke-linejoin="round"/></g><rect x="6.5" y="3.5" width="8.3" height="11.5" fill="#2b2b2b"/><rect x="7.3" y="4.5" width="5" height="4.3" fill="#5aa7e8"/><rect x="7.3" y="9.8" width="5" height="4.3" fill="#4f97d8"/><path d="M8 8.5 L10 6.5 L12 8.5 Z" fill="#e8a04a"/><path d="M8 14 L10 12 L12 14 Z" fill="#e8a04a"/><rect x="13.2" y="4.3" width="1" height="1" fill="#eee"/><rect x="13.2" y="6.199999999999999" width="1" height="1" fill="#eee"/><rect x="13.2" y="8.1" width="1" height="1" fill="#eee"/><rect x="13.2" y="10.0" width="1" height="1" fill="#eee"/><rect x="13.2" y="11.899999999999999" width="1" height="1" fill="#eee"/><rect x="13.2" y="13.8" width="1" height="1" fill="#eee"/></svg>
<div class="t" style="left:51.00px;top:461.50px;line-height:14px;height:14px;letter-spacing:-0.081px;color:#1a1a1a">Videos</div>
<svg style="left:30px;top:481px" width="16" height="16" viewBox="0 0 16 16"><rect x="1" y="0" width="3.4" height="3.8" fill="#19b6ee"/><rect x="5.2" y="0" width="3.4" height="3.8" fill="#19b6ee"/><rect x="1" y="4.6" width="3.4" height="3.8" fill="#19b6ee"/><rect x="5.2" y="4.6" width="3.4" height="3.8" fill="#19b6ee"/><path d="M1 10.5 Q1 8.2 3.5 8.2 H12.5 Q15 8.2 15 10.5 V13.5 Q15 15.5 13 15.5 H3 Q1 15.5 1 13.5 Z" fill="#e9e9e9" stroke="#8e8e8e" stroke-width=".9"/><rect x="11.6" y="11" width="1.8" height="3" fill="#3db13d"/><rect x="2.5" y="11" width="8" height="3" fill="#2f66b8"/><rect x="3" y="11.8" width="7" height="1.2" fill="#54a36a"/></svg>
<div class="t" style="left:51.00px;top:482.50px;line-height:14px;height:14px;letter-spacing:-0.246px;color:#1a1a1a">Local Disk (C:)</div>
<svg style="left:30px;top:508.5px" width="16" height="10" viewBox="0 0 16 10"><path d="M1 4 Q1 0.8 3.5 0.8 H12.5 Q15 0.8 15 4 V7 Q15 9.2 13 9.2 H3 Q1 9.2 1 7 Z" fill="#e9e9e9" stroke="#8e8e8e" stroke-width=".9"/><rect x="11.6" y="4.6" width="1.8" height="3" fill="#3db13d"/><path d="M1.4 4 Q8 2.4 14.6 4" fill="none" stroke="#bdbdbd" stroke-width=".7"/></svg>
<div class="t" style="left:51.00px;top:503.50px;line-height:14px;height:14px;letter-spacing:-0.114px;color:#1a1a1a">New Volume (D:)</div>
<svg style="left:20px;top:544px" width="17" height="17" viewBox="0 0 17 17"><circle cx="5.8" cy="6" r="5.4" fill="#2f7fe0"/><path d="M2 3.5 Q4.5 1 7 2 Q9 4 6.5 6 Q4 6.5 3 9 Q1 7 2 3.5 Z" fill="#54b848"/><path d="M6.5 8 Q9 7.5 9.5 10 L7 11 Z" fill="#54b848"/><circle cx="4.3" cy="3.6" r="1.5" fill="#dff3ff" opacity=".85"/><rect x="6.5" y="6.5" width="9.5" height="7.2" fill="#e8e8e8" stroke="#7a86a0" stroke-width=".7"/><rect x="7.5" y="7.5" width="7.5" height="5.2" fill="#1f3fd0"/><path d="M10 7.5 L15 7.5 L15 11.5 L12 12.7 Z" fill="#6fb0f6" opacity=".7"/><path d="M10.5 13.8 H12 V15.3 H13.8 V16.3 H8.7 V15.3 H10.5 Z" fill="#7f8aa0"/></svg>
<div class="t" style="left:41.00px;top:545.50px;line-height:14px;height:14px;letter-spacing:0.141px;color:#1a1a1a">Network</div>
<div class="t" style="left:14.00px;top:709.50px;line-height:14px;height:14px;letter-spacing:-0.098px;color:#1e395b">6 items</div>
<div class="abs" style="left:62px;top:711px;width:1px;height:11px;background:#e6e6e6;"></div>
<div class="t" style="left:73.00px;top:709.50px;line-height:14px;height:14px;letter-spacing:-0.048px;color:#1e395b">1 item selected</div>
<div class="abs" style="left:1318px;top:705px;width:22px;height:23px;background:#cce8ff;border:1px solid #84c4f4"></div>
<svg style="left:1321.5px;top:708px" width="16" height="16" viewBox="0 0 16 16"><rect x=".5" y="3.0" width="3" height="3" fill="#fff" stroke="#8d96a8" stroke-width=".7"/><rect x="1.5" y="4.0" width="1" height="1" fill="#36c"/><rect x="6" y="4.0" width="4" height="1.2" fill="#5d6b80"/><rect x="11" y="4.0" width="4" height="1.2" fill="#5d6b80"/><rect x=".5" y="7.5" width="3" height="3" fill="#fff" stroke="#8d96a8" stroke-width=".7"/><rect x="1.5" y="8.5" width="1" height="1" fill="#d22"/><rect x="6" y="8.5" width="4" height="1.2" fill="#5d6b80"/><rect x="11" y="8.5" width="4" height="1.2" fill="#5d6b80"/><rect x=".5" y="12.0" width="3" height="3" fill="#fff" stroke="#8d96a8" stroke-width=".7"/><rect x="1.5" y="13.0" width="1" height="1" fill="#36c"/><rect x="6" y="13.0" width="4" height="1.2" fill="#5d6b80"/><rect x="11" y="13.0" width="4" height="1.2" fill="#5d6b80"/></svg>
<svg style="left:1345px;top:710px" width="13" height="11" viewBox="0 0 13 11"><rect x=".5" y=".5" width="12" height="10" fill="#fff" stroke="#8a8f98" stroke-width=".9"/><rect x="1.8" y="1.8" width="9.4" height="7.4" fill="#6db6f0"/><rect x="1.8" y="1.8" width="9.4" height="2.2" fill="#d9eefc"/><path d="M1.8 7 L5.5 5 L11.2 7.4 V9.2 H1.8 Z" fill="#1d3f5e"/></svg>
<div class="abs" style="left:141px;top:145px;width:1100px;height:600px;background:#f0c869;border:1px solid #cda84f"></div>
<div class="abs" style="left:148px;top:175px;width:1086px;height:560px;background:#f5f6f7;border:1px solid #dcb55c"></div>
<svg style="left:151px;top:152px" width="16" height="16" viewBox="0 0 16 16"><g transform="scale(1.0)"><rect x=".6" y="2.2" width="11.5" height="13" fill="url(#gGreen)" stroke="#222" stroke-width="1.1"/><path d="M1.5 2 V1 M3.3 2 V1 M5.1 2 V1 M6.9 2 V1 M8.7 2 V1 M10.5 2 V1" stroke="#222" stroke-width=".9"/><path d="M2 6.5 H9 M2 8.5 H8" stroke="#9aa" stroke-width=".6"/><path d="M14.8 .6 L15.8 1.8 L8.3 12 L6.4 13.2 L7 11 Z" fill="#f0b028" stroke="#8a3a18" stroke-width=".7"/><path d="M13.9 1.8 L14.8 .6 L15.8 1.8 L15 3 Z" fill="#c0282a"/></g></svg>
<div class="t" style="left:472.00px;top:151.70px;line-height:18px;height:18px;letter-spacing:0.137px;font-size:15px;color:#151515">D:\eclipse\Source code\Command_Hello\plugin.yml - Notepad++</div>
<div class="abs" style="left:1145px;top:157px;width:8px;height:3px;background:#111;"></div>
<div class="abs" style="left:1171px;top:152px;width:10px;height:9px;background:transparent;border:1px solid #111;border-top-width:2px"></div>
<div class="abs" style="left:1189px;top:146px;width:45px;height:20px;background:#c9504e;"></div>
<svg style="left:1207px;top:152px" width="9" height="8" viewBox="0 0 9 8"><path d="M.6 .4 L8.4 7.6 M8.4 .4 L.6 7.6" stroke="#fff" stroke-width="1.9" fill="none"/></svg>
<div class="t" style="left:156.00px;top:178.50px;line-height:14px;height:14px;letter-spacing:-0.396px;color:#000">Tệp</div>
<div class="t" style="left:190.50px;top:178.50px;line-height:14px;height:14px;letter-spacing:-0.378px;color:#000">Chỉnh sửa</div>
<div class="t" style="left:257.00px;top:178.50px;line-height:14px;height:14px;letter-spacing:-0.057px;color:#000">Tìm</div>
<div class="t" style="left:292.30px;top:178.50px;line-height:14px;height:14px;letter-spacing:-0.429px;color:#000">Xem</div>
<div class="t" style="left:330.30px;top:178.50px;line-height:14px;height:14px;letter-spacing:-0.072px;color:#000">Mã hóa</div>
<div class="t" style="left:384.50px;top:178.50px;line-height:14px;height:14px;letter-spacing:0.012px;color:#000">Ngôn ngữ</div>
<div class="t" style="left:452.00px;top:178.50px;line-height:14px;height:14px;letter-spacing:-0.003px;color:#000">Thiết lập</div>
<div class="t" style="left:512.00px;top:178.50px;line-height:14px;height:14px;letter-spacing:0.197px;color:#000">Tools</div>
<div class="t" style="left:555.20px;top:178.50px;line-height:14px;height:14px;letter-spacing:0.071px;color:#000">Macro</div>
<div class="t" style="left:603.50px;top:178.50px;line-height:14px;height:14px;letter-spacing:-0.404px;color:#000">Chạy</div>
<div class="t" style="left:644.50px;top:178.50px;line-height:14px;height:14px;letter-spacing:-0.137px;color:#000">Plugins</div>
<div class="t" style="left:697.20px;top:178.50px;line-height:14px;height:14px;letter-spacing:-0.565px;color:#000">Cửa sổ</div>
<div class="t" style="left:747.00px;top:178.50px;line-height:14px;height:14px;color:#000">?</div>
<div class="t" style="left:1219.00px;top:178.50px;line-height:14px;height:14px;color:#000">X</div>
<div class="abs" style="left:149px;top:194px;width:1084px;height:1px;background:#e8e9ea;"></div>
<div class="abs" style="left:149px;top:219px;width:1084px;height:1px;background:#e3e4e5;"></div>
<div class="abs" style="left:314px;top:198px;width:1px;height:18px;background:#8d8d8d;"></div>
<div class="abs" style="left:391px;top:198px;width:1px;height:18px;background:#8d8d8d;"></div>
<div class="abs" style="left:445px;top:198px;width:1px;height:18px;background:#8d8d8d;"></div>
<div class="abs" style="left:499px;top:198px;width:1px;height:18px;background:#8d8d8d;"></div>
<div class="abs" style="left:553px;top:198px;width:1px;height:18px;background:#8d8d8d;"></div>
<div class="abs" style="left:607px;top:198px;width:1px;height:18px;background:#8d8d8d;"></div>
<div class="abs" style="left:822px;top:198px;width:1px;height:18px;background:#8d8d8d;"></div>
<div class="abs" style="left:659px;top:196px;width:23px;height:22px;background:#cce8ff;border:1px solid #7fbdf0"></div>
<svg style="left:155px;top:199px" width="16" height="16" viewBox="0 0 16 16"><path d="M.5 .5 H7.5 L11.5 4.5 V14.5 H.5 Z" fill="#fff" stroke="#b9b9b9" stroke-width="1"/><path d="M7.5 .5 V4.5 H11.5" fill="#fff" stroke="#b9b9b9" stroke-width="1"/><circle cx="11.5" cy="12" r="3.3" fill="#42b13c" stroke="#2c8a28" stroke-width=".6"/><path d="M11.5 10 V14 M9.5 12 H13.5" stroke="#fff" stroke-width="1.2"/></svg>
<svg style="left:177px;top:199px" width="16" height="16" viewBox="0 0 16 16"><g transform="translate(6,0)"><path d="M.5 .5 H5.5 L8.5 3.5 V10.5 H.5 Z" fill="#cfe4fb" stroke="#3f86d8" stroke-width="1"/><path d="M5.5 .5 V3.5 H8.5" fill="#fff" stroke="#3f86d8" stroke-width="1"/></g><path d="M.5 6.5 H6 L7 8 H13.5 V15.5 H.5 Z" fill="#f9d27a" stroke="#e0a030" stroke-width=".9"/><path d="M1.5 11 H12.5" stroke="#fbe6b0" stroke-width="1.5"/></svg>
<svg style="left:200px;top:199px" width="16" height="16" viewBox="0 0 16 16"><rect x=".7" y=".7" width="14" height="14.6" fill="#8f8f8f" stroke="#8f8f8f" stroke-width=".6"/><rect x="3" y="1" width="9.5" height="6" fill="#f0f0f0"/><rect x="3.5" y="9.5" width="8.5" height="5" fill="#f0f0f0"/><rect x="5" y="10.5" width="2" height="3.5" fill="#8f8f8f"/></svg>
<svg style="left:224px;top:199px" width="16" height="16" viewBox="0 0 16 16"><rect x="1" y="1" width="9" height="9" fill="#8f8f8f"/><rect x="3" y="1.5" width="5" height="2.5" fill="#eee"/><rect x="3.5" y="3.5" width="9" height="9" fill="#8f8f8f" stroke="#f5f6f7" stroke-width=".6"/><rect x="5.5" y="4" width="5" height="2.5" fill="#eee"/><rect x="6" y="6" width="9" height="9" fill="#8f8f8f" stroke="#f5f6f7" stroke-width=".6"/><rect x="8" y="6.5" width="5" height="2.5" fill="#eee"/></svg>
<svg style="left:247px;top:199px" width="16" height="16" viewBox="0 0 16 16"><path d="M.5 .5 H6.5 L10.5 4.5 V13.5 H.5 Z" fill="#fff" stroke="#b9b9b9" stroke-width="1"/><path d="M6.5 .5 V4.5 H10.5" fill="#fff" stroke="#b9b9b9" stroke-width="1"/><rect x="2.5" y="5" width="6" height="0.8" fill="#cfcfcf"/><rect x="2.5" y="7" width="6" height="0.8" fill="#cfcfcf"/><rect x="2.5" y="9" width="6" height="0.8" fill="#cfcfcf"/><rect x="2.5" y="11" width="6" height="0.8" fill="#cfcfcf"/><circle cx="11.5" cy="12" r="3.2" fill="#e8792a" stroke="#c85a10" stroke-width=".6"/><rect x="9.5" y="11.4" width="4" height="1.3" fill="#fff"/></svg>
<svg style="left:270px;top:199px" width="16" height="16" viewBox="0 0 16 16"><g transform="translate(0,0)"><path d="M.5 .5 H5.5 L8.5 3.5 V10.5 H.5 Z" fill="#fff" stroke="#b9b9b9" stroke-width="1"/><path d="M5.5 .5 V3.5 H8.5" fill="#fff" stroke="#b9b9b9" stroke-width="1"/></g><g transform="translate(3,2.5)"><path d="M.5 .5 H5.5 L8.5 3.5 V10.5 H.5 Z" fill="#fff" stroke="#b9b9b9" stroke-width="1"/><path d="M5.5 .5 V3.5 H8.5" fill="#fff" stroke="#b9b9b9" stroke-width="1"/></g><circle cx="12" cy="12" r="3.2" fill="#e8792a" stroke="#c85a10" stroke-width=".6"/><rect x="10" y="11.4" width="4" height="1.3" fill="#fff"/></svg>
<svg style="left:292px;top:199px" width="16" height="16" viewBox="0 0 16 16"><g transform="translate(3.5,0)"><path d="M.5 .5 H5.5 L8.5 3.5 V7.5 H.5 Z" fill="#cfe4fb" stroke="#3f86d8" stroke-width="1"/><path d="M5.5 .5 V3.5 H8.5" fill="#fff" stroke="#3f86d8" stroke-width="1"/></g><rect x=".7" y="6.5" width="14.6" height="6" rx="1.5" fill="#e8e8ea" stroke="#8a8f98" stroke-width=".9"/><rect x="3" y="10.5" width="10" height="4.5" fill="#fff" stroke="#8a8f98" stroke-width=".8"/></svg>
<svg style="left:324px;top:199px" width="16" height="16" viewBox="0 0 16 16"><path d="M10.8 .5 L6.2 10.5 M3.6 4.6 L10.4 10.8" stroke="#9b9b9b" stroke-width="2.6"/><circle cx="4.6" cy="12.4" r="2.1" fill="none" stroke="#9b9b9b" stroke-width="2"/><circle cx="11.4" cy="12.6" r="2.1" fill="none" stroke="#9b9b9b" stroke-width="2"/></svg>
<svg style="left:346px;top:199px" width="16" height="16" viewBox="0 0 16 16"><path d="M1 1 H7 L9 3 V10 H1 Z" fill="#d5d5d5" stroke="#9b9b9b" stroke-width="1.2"/><path d="M6 5 H12 L14 7 V15 H6 Z" fill="#d5d5d5" stroke="#9b9b9b" stroke-width="1.2"/></svg>
<svg style="left:369px;top:199px" width="16" height="16" viewBox="0 0 16 16"><rect x="1" y="2" width="11" height="12" fill="#9b9b9b"/><rect x="4" y=".8" width="5" height="2.2" fill="#7f7f7f"/><path d="M7 6 H12.5 L14.5 8 V15.3 H7 Z" fill="#e0e0e0" stroke="#9b9b9b" stroke-width="1.1"/></svg>
<svg style="left:400px;top:199px" width="16" height="16" viewBox="0 0 16 16"><path d="M6 11.2 H9.3 Q12.6 11.2 12.6 7.6 Q12.6 4.2 9.3 4.2 H3.5" fill="none" stroke="#9b9b9b" stroke-width="3.3"/><path d="M6.6 6.6 V15.6 L.6 11.2 Z" fill="#9b9b9b"/></svg>
<svg style="left:423px;top:199px" width="16" height="16" viewBox="0 0 16 16"><path d="M10 11.2 H6.7 Q3.4 11.2 3.4 7.6 Q3.4 4.2 6.7 4.2 H12.5" fill="none" stroke="#9b9b9b" stroke-width="3.3"/><path d="M9.4 6.6 V15.6 L15.4 11.2 Z" fill="#9b9b9b"/></svg>
<svg style="left:455px;top:199px" width="16" height="16" viewBox="0 0 16 16"><rect x="1" y="5" width="5.6" height="8.5" rx="1" fill="#2b2b2b"/><rect x="8.4" y="5" width="5.6" height="8.5" rx="1" fill="#2b2b2b"/><rect x="2" y="2" width="3.6" height="3.5" fill="#444"/><rect x="9.4" y="2" width="3.6" height="3.5" fill="#444"/><rect x="6" y="5.5" width="3" height="3" fill="#555"/><rect x="2" y="9.5" width="3.6" height="3" fill="#9aa"/><rect x="9.4" y="9.5" width="3.6" height="3" fill="#9aa"/></svg>
<svg style="left:477px;top:199px" width="16" height="16" viewBox="0 0 16 16"><path d="M1.5 .5 V7 M1.5 4.5 Q3.5 2.5 5.2 4.2 Q6 6.8 1.8 6.8" fill="none" stroke="#2f7fd6" stroke-width="1.5"/><path d="M5 5 L10 10" stroke="#3a9a4a" stroke-width="1.5"/><path d="M10.8 8 L11 11 L8 10.8 Z" fill="#3a9a4a"/><ellipse cx="8.6" cy="12.6" rx="2.2" ry="2" fill="none" stroke="#2f7fd6" stroke-width="1.5"/><ellipse cx="13" cy="10.5" rx="2" ry="2.6" fill="none" stroke="#2f7fd6" stroke-width="1.5"/><path d="M15 8 V14.8 H12" fill="none" stroke="#2f7fd6" stroke-width="1.4"/></svg>
<svg style="left:509px;top:199px" width="16" height="16" viewBox="0 0 16 16"><circle cx="5.5" cy="5.5" r="4.6" fill="#dceeff" stroke="#a8c8ee" stroke-width="1"/><path d="M8.8 9 L13.2 13.6" stroke="#c8873a" stroke-width="2.4" stroke-linecap="round"/><path d="M9.5 3 V9 M6.5 6 H12.5" stroke="#38a838" stroke-width="2.4"/></svg>
<svg style="left:532px;top:199px" width="16" height="16" viewBox="0 0 16 16"><circle cx="5.5" cy="5.5" r="4.6" fill="#dceeff" stroke="#a8c8ee" stroke-width="1"/><path d="M8.8 9 L13.2 13.6" stroke="#c8873a" stroke-width="2.4" stroke-linecap="round"/><rect x="6.5" y="4.6" width="7" height="2.6" fill="#e03a2a"/></svg>
<svg style="left:562px;top:199px" width="16" height="16" viewBox="0 0 16 16"><rect x=".6" y=".6" width="13" height="11" fill="#fff" stroke="#4a90e0" stroke-width="1.1"/><rect x=".6" y=".6" width="13" height="2" fill="#bcd8f8"/><path d="M7 2.6 V11.6" stroke="#4a90e0" stroke-width="1"/><rect x="6.5" y="8.5" width="9" height="7" fill="url(#gLock)" stroke="#c9922a" stroke-width=".7"/><path d="M8.5 8.5 V6.5 Q8.5 4.3 11 4.3 Q13.5 4.3 13.5 6.5 V8.5" fill="none" stroke="#b4b4b4" stroke-width="1.7"/></svg>
<svg style="left:585px;top:199px" width="16" height="16" viewBox="0 0 16 16"><rect x=".6" y=".6" width="13" height="11" fill="#fff" stroke="#4a90e0" stroke-width="1.1"/><rect x=".6" y=".6" width="13" height="2" fill="#bcd8f8"/><path d="M.6 7 H13.6" stroke="#4a90e0" stroke-width="1"/><rect x="6.5" y="8.5" width="9" height="7" fill="url(#gLock)" stroke="#c9922a" stroke-width=".7"/><path d="M8.5 8.5 V6.5 Q8.5 4.3 11 4.3 Q13.5 4.3 13.5 6.5 V8.5" fill="none" stroke="#b4b4b4" stroke-width="1.7"/></svg>
<svg style="left:616px;top:199px" width="16" height="16" viewBox="0 0 16 16"><path d="M1 3 H10 M1 6 H9 M1 9 H15.5 V13 H11" fill="none" stroke="#222" stroke-width="1.1"/><path d="M1 12.2 H8 M1 14.2 H8" stroke="#3f86d8" stroke-width="1.1"/><path d="M12.8 10.8 L10.4 13 L12.8 15.2" fill="none" stroke="#3f86d8" stroke-width="1.2"/><path d="M15.5 9 V13 H11" fill="none" stroke="#3f86d8" stroke-width="1.2"/></svg>
<svg style="left:641px;top:200px" width="16" height="16" viewBox="0 0 16 16"><path d="M5 1.5 H9.5 M5 1.5 Q1.6 1.5 1.6 4.5 Q1.6 7.5 5 7.5 M5 1.5 V14 M8 1.5 V14" fill="none" stroke="#3f86d8" stroke-width="1.5"/><path d="M5 1.5 Q1.6 1.5 1.6 4.5 Q1.6 7.5 5 7.5 Z" fill="#3f86d8"/></svg>
<svg style="left:663px;top:199px" width="16" height="16" viewBox="0 0 16 16"><path d="M3.5 .5 V15.5" stroke="#e02020" stroke-width="1.1" stroke-dasharray="1.4 1.2"/><path d="M5.5 2 H15 M5.5 5 H12 M5.5 8 H14 M5.5 11 H11 M1 14 H8" stroke="#0a1ee8" stroke-width="1.6"/><path d="M1 2 H2.5" stroke="#0a1ee8" stroke-width="1.6"/></svg>
<svg style="left:685px;top:199px" width="16" height="16" viewBox="0 0 16 16"><rect x=".6" y="1.6" width="14.8" height="12" fill="#fff" stroke="#5a9ae4" stroke-width="1.1"/><rect x=".6" y="1.6" width="14.8" height="2.2" fill="#bcd8f8"/><path d="M9.5 4.5 L5 9 H8 L5.5 13.5 L12.5 7.5 H9.2 L11.5 4.5 Z" fill="#f2c53a" stroke="#d49a18" stroke-width=".5"/></svg>
<svg style="left:708px;top:199px" width="16" height="16" viewBox="0 0 16 16"><rect x=".7" y=".7" width="14.6" height="14.6" rx="1" fill="#f4dc78" stroke="#4a4a3a" stroke-width="1.1"/><path d="M1.5 9 L8 8 L14.5 12 V14.5 H1.5 Z" fill="#9ad07a"/><path d="M3 1.5 L9 14.5 M6 1.5 L6.5 6 M13 2 L6.5 12" stroke="#e05a2a" stroke-width="1.1" fill="none"/><path d="M9.5 1.5 H14.5 V7 Z" fill="#8ac0ea"/></svg>
<svg style="left:731px;top:199px" width="16" height="16" viewBox="0 0 16 16"><rect x=".6" y=".6" width="9" height="11" rx="1" fill="#eaf3fd" stroke="#4a90e0" stroke-width="1.1"/><rect x="3.6" y="2.6" width="9" height="11" rx="1" fill="#eaf3fd" stroke="#4a90e0" stroke-width="1.1"/><g transform="translate(7,5.5)"><path d="M.5 .5 H5.0 L8.0 3.5 V9.5 H.5 Z" fill="#d4e6fa" stroke="#4a90e0" stroke-width="1"/><path d="M5.0 .5 V3.5 H8.0" fill="#fff" stroke="#4a90e0" stroke-width="1"/></g></svg>
<svg style="left:755px;top:199px" width="16" height="16" viewBox="0 0 16 16"><path d="M.5 .5 H8.5 L12.5 4.5 V14.5 H.5 Z" fill="#fff" stroke="#8f8f8f" stroke-width="1"/><path d="M8.5 .5 V4.5 H12.5" fill="#fff" stroke="#8f8f8f" stroke-width="1"/><path d="M8.5 2.5 Q5.8 1.6 5.5 5 L4.8 12 Q4.5 14.2 2 13.4" fill="none" stroke="#d42a1c" stroke-width="1.8"/><path d="M3 7.6 H8" stroke="#d42a1c" stroke-width="1.4"/><path d="M9.5 8 V8.1 M9.5 11 V11.1 M11 14 H11.1" stroke="#777" stroke-width="1"/></svg>
<svg style="left:777px;top:200px" width="16" height="16" viewBox="0 0 16 16"><path d="M.6 3.5 V13.5 H14.4 V5 H7 L6 3.5 Z" fill="#f6c9c4" stroke="#e07a72" stroke-width="1"/><path d="M1.5 7 H13.5" stroke="#fbe6e4" stroke-width="1.4"/><rect x="2" y="1.6" width="5" height="1.6" fill="#e07a72"/></svg>
<svg style="left:800px;top:199px" width="16" height="16" viewBox="0 0 16 16"><path d="M.5 8 Q8 .8 15.5 8 Q8 14.6 .5 8 Z" fill="#f4f6fb" stroke="#d8a060" stroke-width="1"/><circle cx="8" cy="7.7" r="3.6" fill="#7aa6dc"/><circle cx="8" cy="7.7" r="1.7" fill="#22324a"/><circle cx="6.8" cy="6.5" r=".9" fill="#fff"/></svg>
<svg style="left:832px;top:200px" width="16" height="16" viewBox="0 0 16 16"><rect x=".6" y=".6" width="12.8" height="13.8" fill="#fff" stroke="#7a7a7a" stroke-width="1"/><circle cx="7" cy="7.5" r="3.3" fill="#dc1414"/></svg>
<svg style="left:855px;top:200px" width="16" height="16" viewBox="0 0 16 16"><rect x=".6" y=".6" width="12.8" height="13.8" fill="#fff" stroke="#7a7a7a" stroke-width="1"/><rect x="3.6" y="4" width="6.8" height="7" fill="#a0a0a0"/></svg>
<svg style="left:878px;top:200px" width="16" height="16" viewBox="0 0 16 16"><rect x=".6" y=".6" width="12.8" height="13.8" fill="#fff" stroke="#7a7a7a" stroke-width="1"/><path d="M4.6 3.6 L10 7.5 L4.6 11.4 Z" fill="#a0a0a0"/></svg>
<svg style="left:901px;top:200px" width="16" height="16" viewBox="0 0 16 16"><rect x=".6" y=".6" width="12.8" height="13.8" fill="#fff" stroke="#7a7a7a" stroke-width="1"/><path d="M2.6 3.6 L7 7.5 L2.6 11.4 Z M7 3.6 L11.6 7.5 L7 11.4 Z" fill="#2b6fe0"/></svg>
<svg style="left:923px;top:199px" width="16" height="16" viewBox="0 0 16 16"><rect x=".5" y=".5" width="12" height="12" fill="#9a9a9a"/><path d="M2 3 H11 M2 5.5 H5 M6 5.5 H9 M2 8 H5 M6 8 H9" stroke="#eee" stroke-width="1.2"/><rect x="6.5" y="6.5" width="9" height="9" fill="#8a8a8a" stroke="#f5f6f7" stroke-width=".6"/><rect x="8.5" y="7" width="5" height="3" fill="#e4e4e4"/><rect x="9" y="11.5" width="4" height="3" fill="#e4e4e4"/></svg>
<div class="abs" style="left:149px;top:220px;width:1084px;height:27px;background:#f0f0f0;"></div>
<div class="abs" style="left:151px;top:223px;width:87px;height:4px;background:#f7a535;"></div>
<div class="abs" style="left:237px;top:222px;width:1.5px;height:25px;background:#6b6b6b;"></div>
<svg style="left:155px;top:229px" width="13" height="13" viewBox="0 0 13 13"><rect x=".6" y=".6" width="11.8" height="11.8" rx="1" fill="#cfe2f8" stroke="#3f86d8" stroke-width="1.1"/><rect x="3" y="1" width="6.5" height="3.2" fill="#fff"/><rect x="4.2" y="1.2" width="1.2" height="2.2" fill="#3f86d8"/><rect x="2" y="6" width="9" height="1.6" fill="#8ab4e8"/><rect x="2.6" y="8.8" width="7.8" height="2.2" fill="#7ccf6a"/></svg>
<div class="t" style="left:171.00px;top:229.00px;line-height:14px;height:14px;letter-spacing:-0.353px;font-size:11px;color:#000">plugin.yml</div>
<div class="abs" style="left:221px;top:230px;width:11px;height:11px;background:#b4677c;"></div>
<svg style="left:222.5px;top:231.5px" width="8" height="8" viewBox="0 0 8 8"><path d="M1 1 L7 7 M7 1 L1 7" stroke="#fff" stroke-width="2"/></svg>
<div class="abs" style="left:149px;top:246px;width:1084px;height:1px;background:#fcfcfc;"></div>
<div class="abs" style="left:149px;top:221px;width:1px;height:520px;background:#fff;"></div>
<div class="abs" style="left:151px;top:247px;width:1082px;height:490px;background:#fff;"></div>
<div class="abs" style="left:151px;top:247px;width:1082px;height:1px;background:#9c9c9c;"></div>
<div class="abs" style="left:152px;top:248px;width:1081px;height:1px;background:#696969;"></div>
<div class="abs" style="left:151px;top:247px;width:1px;height:490px;background:#9c9c9c;"></div>
<div class="abs" style="left:152px;top:248px;width:1px;height:490px;background:#696969;"></div>
<div class="abs" style="left:1229px;top:249px;width:2px;height:490px;background:#fbfbfb;"></div>
<div class="abs" style="left:1231px;top:248px;width:1px;height:490px;background:#8c8e92;"></div>
<div class="abs" style="left:1232px;top:247px;width:1px;height:490px;background:#6a6c70;"></div>
<div class="abs" style="left:153px;top:249px;width:32px;height:480px;background:#e4e4e4;"></div>
<div class="abs" style="left:185px;top:249px;width:16px;height:480px;background:#e0e0e0;"></div>
<div class="abs" style="left:201px;top:249px;width:14px;height:480px;background:#f3f3f3;background-image:linear-gradient(45deg,#e6e6e6 25%,transparent 25%,transparent 75%,#e6e6e6 75%),linear-gradient(45deg,#e6e6e6 25%,#fbfbfb 25%,#fbfbfb 75%,#e6e6e6 75%);background-size:2px 2px;background-position:0 0,1px 1px"></div>
<div class="abs" style="left:215px;top:249px;width:997px;height:16px;background:#e8e8ff;"></div>
<div class="abs" style="left:215px;top:249px;width:1.4px;height:16px;background:#0a0ae0;"></div>
<div class="abs" style="left:1212px;top:249px;width:17px;height:480px;background:#f0f0f0;"></div>
<div class="abs" style="left:1213px;top:266px;width:15px;height:429px;background:#cdcdcd;"></div>
<svg style="left:1216.5px;top:255px" width="8" height="6" viewBox="0 0 8 6"><path d="M.7 5.3 L4 1.6 L7.3 5.3" fill="none" stroke="#505050" stroke-width="1.9"/></svg>
<div class="t" style="left:175.55px;top:250.30px;line-height:14px;height:14px;font-size:10.7px;color:#808080">1</div>
<div class="t" style="left:175.55px;top:266.30px;line-height:14px;height:14px;font-size:10.7px;color:#808080">2</div>
<div class="t" style="left:175.55px;top:282.30px;line-height:14px;height:14px;font-size:10.7px;color:#808080">3</div>
<div class="t" style="left:175.55px;top:298.30px;line-height:14px;height:14px;font-size:10.7px;color:#808080">4</div>
<div class="t" style="left:175.55px;top:314.30px;line-height:14px;height:14px;font-size:10.7px;color:#808080">5</div>
<div class="t" style="left:175.55px;top:330.30px;line-height:14px;height:14px;font-size:10.7px;color:#808080">6</div>
<div class="t" style="left:175.55px;top:346.30px;line-height:14px;height:14px;font-size:10.7px;color:#808080">7</div>
<div class="t" style="left:175.55px;top:362.30px;line-height:14px;height:14px;font-size:10.7px;color:#808080">8</div>
<div class="t" style="left:175.55px;top:378.30px;line-height:14px;height:14px;font-size:10.7px;color:#808080">9</div>
<div class="t m" style="left:215.00px;top:249.50px;line-height:16px;height:16px;letter-spacing:0.000px;font-size:13.33px;color:#000080;transform:scaleY(.87);transform-origin:0 11.6px;-webkit-text-stroke:.3px #000080">main:</div>
<div class="t m" style="left:263.00px;top:249.50px;line-height:16px;height:16px;letter-spacing:0.001px;font-size:13.33px;color:#000;transform:scaleY(.87);transform-origin:0 11.6px">server.feature.PlayerCommand.main</div>
<div class="t m" style="left:215.00px;top:265.50px;line-height:16px;height:16px;letter-spacing:0.000px;font-size:13.33px;color:#000080;transform:scaleY(.87);transform-origin:0 11.6px;-webkit-text-stroke:.3px #000080">name:</div>
<div class="t m" style="left:263.00px;top:265.50px;line-height:16px;height:16px;letter-spacing:0.001px;font-size:13.33px;color:#000;transform:scaleY(.87);transform-origin:0 11.6px">CommandHello</div>
<div class="t m" style="left:215.00px;top:281.50px;line-height:16px;height:16px;letter-spacing:0.000px;font-size:13.33px;color:#000080;transform:scaleY(.87);transform-origin:0 11.6px;-webkit-text-stroke:.3px #000080">version:</div>
<div class="t m" style="left:287.00px;top:281.50px;line-height:16px;height:16px;letter-spacing:0.000px;font-size:13.33px;color:#ff8040;transform:scaleY(.87);transform-origin:0 11.6px">1.0</div>
<div class="t m" style="left:215.00px;top:297.50px;line-height:16px;height:16px;letter-spacing:0.001px;font-size:13.33px;color:#000080;transform:scaleY(.87);transform-origin:0 11.6px;-webkit-text-stroke:.3px #000080">api-version:</div>
<div class="t m" style="left:319.00px;top:297.50px;line-height:16px;height:16px;letter-spacing:0.000px;font-size:13.33px;color:#ff8040;transform:scaleY(.87);transform-origin:0 11.6px">1.8.8</div>
<div class="t m" style="left:215.00px;top:313.50px;line-height:16px;height:16px;letter-spacing:0.000px;font-size:13.33px;color:#000080;transform:scaleY(.87);transform-origin:0 11.6px;-webkit-text-stroke:.3px #000080">command:</div>
<div class="t m" style="left:247.00px;top:329.50px;line-height:16px;height:16px;letter-spacing:0.000px;font-size:13.33px;color:#000080;transform:scaleY(.87);transform-origin:0 11.6px;-webkit-text-stroke:.3px #000080">hello:</div>
<div class="t m" style="left:279.00px;top:345.50px;line-height:16px;height:16px;letter-spacing:0.001px;font-size:13.33px;color:#000080;transform:scaleY(.87);transform-origin:0 11.6px;-webkit-text-stroke:.3px #000080">description:</div>
<div class="t m" style="left:383.00px;top:345.50px;line-height:16px;height:16px;letter-spacing:0.002px;font-size:13.33px;color:#000;transform:scaleY(.87);transform-origin:0 11.6px">Say hello with you</div>
<div class="t m" style="left:279.00px;top:361.50px;line-height:16px;height:16px;letter-spacing:0.000px;font-size:13.33px;color:#000080;transform:scaleY(.87);transform-origin:0 11.6px;-webkit-text-stroke:.3px #000080">usage:</div>
<div class="t m" style="left:335.00px;top:361.50px;line-height:16px;height:16px;letter-spacing:0.002px;font-size:13.33px;color:#000;transform:scaleY(.87);transform-origin:0 11.6px">/&lt;command&gt;</div>
<div class="abs" style="left:203px;top:316px;width:11px;height:11px;background:#fff;border:1px solid #808080"></div>
<div class="abs" style="left:205px;top:321px;width:7px;height:1px;background:#808080;"></div>
<div class="abs" style="left:203px;top:332px;width:11px;height:11px;background:#fff;border:1px solid #808080"></div>
<div class="abs" style="left:205px;top:337px;width:7px;height:1px;background:#808080;"></div>
<div class="abs" style="left:208px;top:327px;width:1px;height:5px;background:#808080;"></div>
<div class="abs" style="left:208px;top:343px;width:1px;height:43px;background:#808080;"></div>
<div class="abs" style="left:208px;top:385px;width:6px;height:1px;background:#808080;"></div>
<div class="abs" style="left:248px;top:346px;width:1px;height:48px;background:transparent;background-image:linear-gradient(#a8a8a8 50%,transparent 50%);background-size:1px 2px"></div>
<div class="abs" style="left:0px;top:728px;width:1366px;height:40px;background:#c4b48f;"></div>
<div class="abs" style="left:0px;top:728px;width:141px;height:40px;background:#c6932f;background:linear-gradient(100deg,#c38a2a 0%,#c58f2c 45%,#c9983a 75%,#c99a3c 100%)"></div>
<div class="abs" style="left:141px;top:728px;width:8px;height:40px;background:#c9a349;"></div>
<div class="abs" style="left:149px;top:728px;width:2px;height:40px;background:#bfb08a;"></div>
<div class="abs" style="left:151px;top:728px;width:2px;height:40px;background:#8f8568;"></div>
<div class="abs" style="left:153px;top:728px;width:48px;height:40px;background:#bfb08b;"></div>
<div class="abs" style="left:201px;top:728px;width:14px;height:40px;background:#c2b38e;"></div>
<div class="abs" style="left:1212px;top:728px;width:17px;height:40px;background:#c7b994;"></div>
<div class="abs" style="left:1229px;top:728px;width:2px;height:40px;background:#c6b792;"></div>
<div class="abs" style="left:1231px;top:728px;width:2px;height:40px;background:#968868;"></div>
<div class="abs" style="left:1233px;top:728px;width:8px;height:40px;background:#c9a349;"></div>
<div class="abs" style="left:1241px;top:728px;width:125px;height:40px;background:#c49c38;"></div>
<svg style="left:1241px;top:728px" width="125" height="40" viewBox="0 0 125 40"><path d="M0 19 L62 40 H0 Z" fill="#cca84a"/><path d="M0 30 L24 40 H0 Z" fill="#c8a03e"/></svg>
<div class="abs" style="left:0px;top:728px;width:1366px;height:1px;background:rgba(0,0,0,.07);"></div>
<div class="abs" style="left:175px;top:728px;width:55px;height:40px;background:#cdc19d;border:1px solid #a6966e;box-shadow:inset 0 0 0 1px #e2d9be"></div>
<div class="abs" style="left:229px;top:728px;width:6px;height:40px;background:#cdc19d;border:1px solid #a6966e;border-left:none;box-shadow:inset -1px 0 0 0 #e2d9be,inset 0 1px 0 0 #e2d9be,inset 0 -1px 0 0 #e2d9be"></div>
<div class="abs" style="left:299px;top:728px;width:60px;height:40px;background:#cdc19d;border:1px solid #a6966e;box-shadow:inset 0 0 0 1px #e2d9be"></div>
<div class="abs" style="left:361px;top:728px;width:60px;height:40px;background:#cdc19d;border:1px solid #a6966e;box-shadow:inset 0 0 0 1px #e2d9be"></div>
<div class="abs" style="left:423px;top:728px;width:60px;height:40px;background:#d6ccb1;border:1px solid #8c7658;box-shadow:inset 0 0 0 1px #f8f4e8"></div>
<svg style="left:12px;top:734px" width="27" height="27" viewBox="0 0 27 27"><path d="M0 3.8 L11.2 2.2 V12.8 H0 Z M12.6 2 L26.5 0 V12.8 H12.6 Z M0 14.2 H11.2 V24.8 L0 23.2 Z M12.6 14.2 H26.5 V27 L12.6 25 Z" fill="#fff"/></svg>
<svg style="left:68px;top:732px" width="27" height="30" viewBox="0 0 27 30"><circle cx="16.5" cy="10.5" r="9" fill="rgba(232,224,200,.6)" stroke="#9a968c" stroke-width="2"/><path d="M8.5 12 Q16 6 24.5 9.5 Q23 2.5 16.5 2.3 Q9 3 8.5 12 Z" fill="#efeadb" opacity=".8"/><path d="M10.5 17.5 L2 28" stroke="#8a8a86" stroke-width="3.4" stroke-linecap="round"/><path d="M10 18 L2.4 27.4" stroke="#d4d4d0" stroke-width="1.2" stroke-linecap="round"/></svg>
<svg style="left:128px;top:731px" width="32" height="33" viewBox="0 0 32 33"><path d="M26 17.5 A10 10 0 1 0 23.6 24" fill="none" stroke="#2f8fdc" stroke-width="7.6"/><path d="M26 17.5 A10 10 0 1 0 23.6 24" fill="none" stroke="#6ec2f6" stroke-width="5.6"/><path d="M8 19.3 H29.6" stroke="#2f8fdc" stroke-width="5.8"/><path d="M8 19.3 H28.8" stroke="#6ec2f6" stroke-width="4"/><path d="M11 10.5 Q16 6.5 22 10" fill="none" stroke="#a6dcfb" stroke-width="1.6"/><path d="M3.5 29 Q-3 17 10 7.5 Q22 -.5 29.5 3.5 Q22.5 2.6 13 9.5 Q2.5 18 6 28.5 Z" fill="#f7c63c" stroke="#e8a820" stroke-width=".6"/><path d="M26.5 2.6 Q31.6 4.4 28.6 10.6" fill="none" stroke="#f7c63c" stroke-width="2"/></svg>
<svg style="left:187px;top:734px" width="31" height="30" viewBox="0 0 31 30"><path d="M1 4 H7 L8.5 2 H13 L14.5 4 H20 L21.5 2.5 H28 L30 4.5 V26 H1 Z" fill="#f4d77c" stroke="#dcb04a" stroke-width=".8"/><rect x="4" y="2.2" width="3" height="1.8" fill="#3aa83a"/><rect x="12" y="4" width="3" height="1.8" fill="#dc3a2a"/><rect x="20" y="5.4" width="3" height="1.8" fill="#2f8fe0"/><path d="M1 9 H30 V26 H1 Z" fill="#f9e7a4" stroke="#e3bd5c" stroke-width=".6"/><path d="M4 29 V19 Q4 16.5 6.5 16.5 H24.5 Q27 16.5 27 19 V29 H21 V23 H10 V29 Z" fill="#7db8ec" stroke="#3f86d8" stroke-width="1"/><path d="M5.5 19 H25.5" stroke="#cfe6fa" stroke-width="1.6"/></svg>
<svg style="left:253.5px;top:734.2px" width="27" height="27" viewBox="0 0 27 27"><defs><linearGradient id="gCC" x1="0" y1="0" x2="1" y2="1"><stop offset="0" stop-color="#8ad24a"/><stop offset=".55" stop-color="#74cc48"/><stop offset="1" stop-color="#44bc4c"/></linearGradient></defs><circle cx="13.3" cy="13.6" r="13.2" fill="#fff"/><path d="M13.3 .3 L26.7 .3 L25 5.4 L26.6 13.6 Z" fill="#fff"/><path d="M22.16 12.3 A8.95 8.95 0 1 1 12.83 4.6" fill="none" stroke="url(#gCC)" stroke-width="6.4"/><circle cx="13.3" cy="13.6" r="3.9" fill="#5ec24a"/><path d="M14.8 1.6 L16.6 1.8 L15.4 7.7 L14.5 7.5 Z" fill="#f0602a"/><path d="M20.6 1.6 L24.7 1.7 L17.2 9.6 L16.5 8.9 Z" fill="#44b848"/><path d="M18.3 10.6 L23.8 7.4 L24.5 9.2 L18.7 11.6 Z" fill="#f0602a"/></svg>
<svg style="left:313px;top:732px" width="32" height="32" viewBox="0 0 32 32"><defs><linearGradient id="gE1" x1="0" y1="0" x2="1" y2="0"><stop offset="0" stop-color="#2ab8ee"/><stop offset=".5" stop-color="#30c4d8"/><stop offset=".75" stop-color="#4ccf86"/><stop offset="1" stop-color="#6ccc3c"/></linearGradient></defs><path d="M.4 14 Q2 3.5 12 .8 Q22 -1.2 29 6 Q33 11.5 31.6 17 Q30 21.6 25 22 Q20.5 22 18.6 20.2 Q21 17.5 19.6 13.6 Q17 8.2 10.6 8.2 Q4 8.6 .4 14 Z" fill="url(#gE1)"/><path d="M.4 14 Q4 8.6 10.6 8.2 Q15.5 8.2 18.4 11.6 Q13 10.6 10.6 15.6 Q8.6 22 13.5 27.6 Q17 31.4 22.5 31.4 Q14 33.6 7.5 29 Q-.6 22.6 .4 14 Z" fill="#0e78d6"/><path d="M18.4 11.6 Q14.6 10.4 12.2 13.4 Q11 17 13.6 21 Q17.6 26 24.6 25.6 Q28 25.2 30 23.6 Q27.6 29.6 22.5 31.4 Q16 31.8 12 26 Q7.6 19 10.8 13.4 Q13.6 9.6 18.4 11.6 Z" fill="#143c98"/><path d="M3 11.4 Q7 7.6 12 8.2 Q8 9 5.6 12.6 Q3.6 16 4 20 Q2 15.6 3 11.4 Z" fill="#2a9ae6" opacity=".6"/></svg>
<svg style="left:375px;top:735px" width="32" height="29" viewBox="0 0 32 29"><rect x="1" y="6.5" width="5.5" height="16" rx="1" fill="#c9ccd0" stroke="#80848a" stroke-width=".8"/><rect x="2.2" y="8" width="2.4" height="1.6" fill="#3db13d"/><rect x="5.5" y=".8" width="25" height="19.5" rx="1" fill="#dfe2e6" stroke="#8a8e94" stroke-width="1"/><rect x="7.5" y="2.8" width="21" height="15.4" fill="#eef6fd"/><path d="M7.5 14 L11 13 L13 10 L15 13.5 L17 5 L19.5 12 L21.5 9.5 L23.5 13 L28.5 11.5 V18.2 H7.5 Z" fill="#bcd9f4"/><path d="M7.5 14 L11 13 L13 10 L15 13.5 L17 5 L19.5 12 L21.5 9.5 L23.5 13 L28.5 11.5" fill="none" stroke="#4a90d8" stroke-width="1.1"/><path d="M15 20.5 H21 L22 24 H14 Z" fill="#b4b8be"/><ellipse cx="19" cy="25.5" rx="8.5" ry="3" fill="#d4d7db" stroke="#9a9ea4" stroke-width=".7"/></svg>
<svg style="left:438px;top:732px" width="31" height="32" viewBox="0 0 31 32"><path d="M2.5 1 H20.5 L25.5 6 V31 H2.5 Z" fill="#fff" stroke="#2a2a2a" stroke-width="1.3"/><path d="M20.5 1 V6 H25.5" fill="#ddd" stroke="#2a2a2a" stroke-width="1"/><rect x="3.2" y="14" width="21.6" height="16.4" fill="url(#gGreen)"/><rect x="5" y="3.0" width="14" height=".6" fill="#c9c9c9"/><rect x="5" y="4.8" width="14" height=".6" fill="#c9c9c9"/><rect x="5" y="6.6" width="14" height=".6" fill="#c9c9c9"/><rect x="5" y="8.4" width="14" height=".6" fill="#c9c9c9"/><rect x="5" y="10.2" width="14" height=".6" fill="#c9c9c9"/><path d="M7 22 V11.5 Q7 9.5 9 9.5 Q11 9.5 11 11.5 V22" fill="none" stroke="#111" stroke-width="1.6"/><path d="M12.5 15 H16.5 M14.5 13 V17 M17.5 15 H21.5 M19.5 13 V17" stroke="#111" stroke-width="1.3"/><path d="M28.5 1.5 L30.6 3 L19 25 L16.4 27 L16.9 23.6 Z" fill="#f2b12c" stroke="#8a4a14" stroke-width=".8"/><path d="M27.6 3.2 L28.5 1.5 L30.6 3 L29.7 4.6 Z" fill="#c0282a"/><path d="M16.9 23.6 L19 25 L16.4 27 Z" fill="#3a2a1a"/></svg>
<svg style="left:1159px;top:746px" width="10" height="6" viewBox="0 0 10 6"><path d="M0 5.6 L5 .4 L10 5.6 Z" fill="#f2f2f2"/></svg>
<svg style="left:1180px;top:741px" width="16" height="16" viewBox="0 0 16 16"><rect x=".5" y=".5" width="15" height="15" rx="2.2" fill="#1a78d0"/><path d="M.5 10 L6 15.5 H2.7 Q.5 15.5 .5 13.3 Z" fill="#f0b428"/><path d="M.5 12.5 L3.5 15.5 H2.7 Q.5 15.5 .5 13.3 Z" fill="#e0482a"/><rect x="5" y="3" width="8" height="6" fill="none" stroke="#fff" stroke-width=".9"/><path d="M7 4.5 L11 7.5 M11 4.5 L7 7.5" stroke="#fff" stroke-width=".8"/><rect x="8" y="10" width="6" height="3.6" rx="1" fill="#fff"/><path d="M9 11.8 H13" stroke="#1a78d0" stroke-width=".8"/></svg>
<svg style="left:1204px;top:743px" width="17" height="12" viewBox="0 0 17 12"><rect x="0.0" y="9.0" width="2.7" height="2.5" fill="#fff" stroke="#3f5a48" stroke-width=".7"/><rect x="3.4" y="7.0" width="2.7" height="4.5" fill="#fff" stroke="#3f5a48" stroke-width=".7"/><rect x="6.8" y="4.7" width="2.7" height="6.8" fill="#fff" stroke="#3f5a48" stroke-width=".7"/><rect x="10.2" y="2.5" width="2.7" height="9" fill="#fff" stroke="#3f5a48" stroke-width=".7"/><rect x="13.6" y="0.3000000000000007" width="2.7" height="11.2" fill="#fff" stroke="#3f5a48" stroke-width=".7"/></svg>
<svg style="left:1232px;top:742px" width="9" height="14" viewBox="0 0 9 14"><path d="M.6 4.2 H3 L8 .6 V13.4 L3 9.8 H.6 Z" fill="#fff" stroke="#7c7460" stroke-width=".6"/></svg>
<div class="t" style="left:1258.30px;top:741.50px;line-height:14px;height:14px;letter-spacing:-1.139px;color:#fff">ENG</div>
<div class="t" style="left:1299.60px;top:733.60px;line-height:14px;height:14px;letter-spacing:-0.522px;color:#fff">10:20 PM</div>
<div class="t" style="left:1297.00px;top:750.60px;line-height:14px;height:14px;letter-spacing:-0.221px;color:#fff">9/16/2021</div>
</body>
</html>
